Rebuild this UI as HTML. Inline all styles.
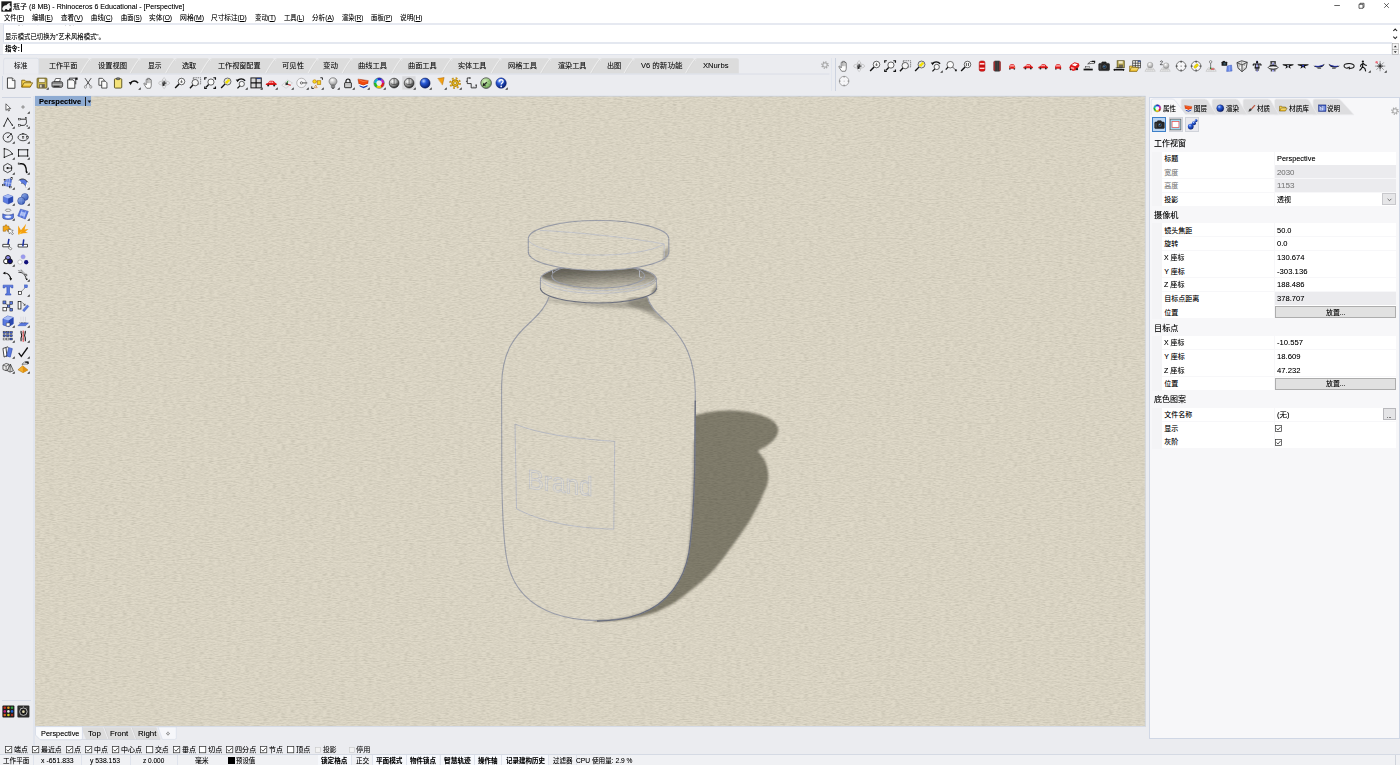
<!DOCTYPE html>
<html lang="zh-CN"><head><meta charset="utf-8"><title>瓶子 - Rhinoceros 6 Educational</title>
<style>
html,body{margin:0;padding:0}
body{width:1400px;height:765px;overflow:hidden;position:relative;background:#ebecf0;font-family:"Liberation Sans","Noto Sans CJK SC",sans-serif;font-size:6.6px;color:#000}
.t{position:absolute;white-space:nowrap;line-height:1.5;transform-origin:0 50%;text-shadow:0 0 0.6px rgba(0,0,0,0.35)}
.b{position:absolute;box-sizing:border-box}
svg{position:absolute;overflow:visible}
u{text-decoration:underline;text-decoration-thickness:0.5px;text-underline-offset:0.6px}
</style></head>
<body>
<svg width="0" height="0" style="left:0;top:0"><defs><radialGradient id="gBall" cx="0.38" cy="0.32" r="0.7"><stop offset="0" stop-color="#fff"/><stop offset="0.45" stop-color="#bbb"/><stop offset="1" stop-color="#222"/></radialGradient><radialGradient id="gBlue" cx="0.36" cy="0.3" r="0.75"><stop offset="0" stop-color="#bcd4ff"/><stop offset="0.35" stop-color="#2a5bd8"/><stop offset="1" stop-color="#061a66"/></radialGradient><radialGradient id="gGreen" cx="0.4" cy="0.35" r="0.7"><stop offset="0" stop-color="#d6f0c0"/><stop offset="0.7" stop-color="#8cc070"/><stop offset="1" stop-color="#4a6a40"/></radialGradient><radialGradient id="gGray" cx="0.4" cy="0.3" r="0.7"><stop offset="0" stop-color="#fff"/><stop offset="1" stop-color="#999"/></radialGradient><linearGradient id="gFold" x1="0" y1="0" x2="0" y2="1"><stop offset="0" stop-color="#fff2a0"/><stop offset="1" stop-color="#e8b010"/></linearGradient><linearGradient id="gBlu2" x1="0" y1="0" x2="1" y2="1"><stop offset="0" stop-color="#9db8f0"/><stop offset="1" stop-color="#2a4fb0"/></linearGradient></defs></svg>
<div class="b" style="left:0.00px;top:0.00px;width:1400.00px;height:23.50px;background:#fff;"></div>
<svg style="left:0.50px;top:0.70px" width="11.00" height="11.00" viewBox="0 0 13 13"><rect x="0.400" y="0.400" width="12.200" height="12.200" fill="#1a1a1a"/><path d="M1.400 9.400c.6-3 2.400-4.600 5-4.400 1.400-2 3-2.800 4.800-2.600-.8.800-1.200 1.600-1 2.600 1.200.8 1.600 2.200 1.400 3.400l-1.600.4-.6 1.800H7.600L7 9.400l-2.200.4-.4 1.600H2.600z" fill="#f4f4f4"/></svg>
<span class="t" id="t1" style="left:12.80px;top:1.87px;font-size:6.70px;color:#000;transform:scaleX(1.0582);">瓶子 (8 MB) - Rhinoceros 6 Educational - [Perspective]</span>
<svg style="left:1330px;top:0" width="70" height="12" viewBox="0 0 70 12"><g stroke="#222" stroke-width="0.7" fill="none"><path d="M4.3 5.5h5.6"/><path d="M29 4.3h4v4h-4z M30 4.3v-1h4v4h-1" /><path d="M54.2 3.2l4.6 4.6M58.8 3.2l-4.6 4.6"/></g></svg>
<span class="t" id="t2" style="left:4.00px;top:13.07px;font-size:7.10px;color:#000;transform:scaleX(0.8762);">文件(<u>F</u>)</span>
<span class="t" id="t3" style="left:32.40px;top:13.07px;font-size:7.10px;color:#000;transform:scaleX(0.8829);">编辑(<u>E</u>)</span>
<span class="t" id="t4" style="left:61.10px;top:13.07px;font-size:7.10px;color:#000;transform:scaleX(0.9251);">查看(<u>V</u>)</span>
<span class="t" id="t5" style="left:90.90px;top:13.07px;font-size:7.10px;color:#000;transform:scaleX(0.9018);">曲线(<u>C</u>)</span>
<span class="t" id="t6" style="left:120.50px;top:13.07px;font-size:7.10px;color:#000;transform:scaleX(0.8787);">曲面(<u>S</u>)</span>
<span class="t" id="t7" style="left:148.80px;top:13.07px;font-size:7.10px;color:#000;transform:scaleX(0.9441);">实体(<u>O</u>)</span>
<span class="t" id="t8" style="left:179.70px;top:13.07px;font-size:7.10px;color:#000;transform:scaleX(0.9695);">网格(<u>M</u>)</span>
<span class="t" id="t9" style="left:211.00px;top:13.07px;font-size:7.10px;color:#000;transform:scaleX(0.9359);">尺寸标注(<u>D</u>)</span>
<span class="t" id="t10" style="left:254.50px;top:13.07px;font-size:7.10px;color:#000;transform:scaleX(0.9020);">变动(<u>T</u>)</span>
<span class="t" id="t11" style="left:283.70px;top:13.07px;font-size:7.10px;color:#000;transform:scaleX(0.8956);">工具(<u>L</u>)</span>
<span class="t" id="t12" style="left:312.00px;top:13.07px;font-size:7.10px;color:#000;transform:scaleX(0.9294);">分析(<u>A</u>)</span>
<span class="t" id="t13" style="left:342.00px;top:13.07px;font-size:7.10px;color:#000;transform:scaleX(0.8852);">渲染(<u>R</u>)</span>
<span class="t" id="t14" style="left:371.00px;top:13.07px;font-size:7.10px;color:#000;transform:scaleX(0.9040);">面板(<u>P</u>)</span>
<span class="t" id="t15" style="left:400.00px;top:13.07px;font-size:7.10px;color:#000;transform:scaleX(0.9351);">说明(<u>H</u>)</span>
<div class="b" style="left:0.00px;top:22.60px;width:1400.00px;height:2.20px;background:#e6e9f1;"></div>
<div class="b" style="left:3.00px;top:24.80px;width:1388.50px;height:17.40px;background:#fff;"></div>
<div class="b" style="left:0.00px;top:24.20px;width:3.00px;height:31.00px;background:#ebecf0;"></div>
<div class="b" style="left:2.60px;top:24.20px;width:0.70px;height:30.00px;background:#d8dde8;"></div>
<div class="b" style="left:3.00px;top:42.20px;width:1397.00px;height:1.50px;background:#e4e8f0;"></div>
<div class="b" style="left:3.30px;top:43.70px;width:1388.20px;height:10.50px;background:#fff;"></div>
<div class="b" style="left:1391.50px;top:24.80px;width:8.50px;height:29.40px;background:#fff;"></div>
<div class="b" style="left:0.00px;top:54.30px;width:1400.00px;height:0.80px;background:#dfe3ec;"></div>
<div class="b" style="left:3px;top:24.8px;width:400px;height:2.8px;overflow:hidden"><span class="t" style="left:1.6px;top:-7.6px;font-size:6.6px;transform:scaleX(0.93)">显示模式已切换为“渲染模式”。</span></div>
<span class="t" id="t16" style="left:4.60px;top:31.98px;font-size:7.10px;color:#000;transform:scaleX(0.8972);">显示模式已切换为"艺术风格模式"。</span>
<span class="t" id="t17" style="left:4.60px;top:43.58px;font-size:7.10px;color:#000;font-weight:bold;transform:scaleX(0.8936);">指令:</span>
<div class="b" style="left:21.30px;top:43.80px;width:0.60px;height:8.60px;background:#000;"></div>
<svg style="left:1391px;top:24px" width="9" height="32" viewBox="0 0 9 32"><g stroke="#222" stroke-width="1.05" fill="none"><path d="M2.3 7l1.9-1.9 1.9 1.9"/><path d="M2.3 12.6l1.9 1.9 1.9-1.9"/></g><rect x="1.3" y="19.6" width="6" height="5.6" fill="#f4f4f4" stroke="#999" stroke-width="0.5"/><path d="M2.8 23.3l1.5-1.8 1.5 1.8z" fill="#222"/><rect x="1.3" y="25.6" width="6" height="5" fill="#f4f4f4" stroke="#999" stroke-width="0.5"/><path d="M2.8 27.2l1.5 1.8 1.5-1.8z" fill="#222"/></svg>
<svg style="left:0;top:57px" width="840" height="18" viewBox="0 57 840 18"><path d="M38.5 58.3 H737 Q738.8 58.3 738.8 60 V73.6 H38.5 Z" fill="#dcdcdc"/><path d="M3.6 74.2 V60.2 Q3.6 58.3 5.6 58.3 H36.8 Q38.8 58.3 38.8 60.2 V74.2 Z" fill="#ebecf0" stroke="#d5dae4" stroke-width="0.6"/><rect x="4" y="73.4" width="34.5" height="1.4" fill="#ebecf0"/><path d="M87.80 58 H91.90 L90.10 61.6 C90.10 60 89.50 58.8 87.80 58.3 Z" fill="#ebecf0"/><path d="M90.50 58.5 C88.50 60 83.50 68 80.50 73.6" stroke="#eeeeee" stroke-width="1.1" fill="none"/><path d="M91.30 58.5 C89.30 60 84.30 68 81.30 73.6" stroke="#cfcfcf" stroke-width="0.5" fill="none"/><path d="M137.30 58 H141.40 L139.60 61.6 C139.60 60 139.00 58.8 137.30 58.3 Z" fill="#ebecf0"/><path d="M140.00 58.5 C138.00 60 133.00 68 130.00 73.6" stroke="#eeeeee" stroke-width="1.1" fill="none"/><path d="M140.80 58.5 C138.80 60 133.80 68 130.80 73.6" stroke="#cfcfcf" stroke-width="0.5" fill="none"/><path d="M172.80 58 H176.90 L175.10 61.6 C175.10 60 174.50 58.8 172.80 58.3 Z" fill="#ebecf0"/><path d="M175.50 58.5 C173.50 60 168.50 68 165.50 73.6" stroke="#eeeeee" stroke-width="1.1" fill="none"/><path d="M176.30 58.5 C174.30 60 169.30 68 166.30 73.6" stroke="#cfcfcf" stroke-width="0.5" fill="none"/><path d="M207.80 58 H211.90 L210.10 61.6 C210.10 60 209.50 58.8 207.80 58.3 Z" fill="#ebecf0"/><path d="M210.50 58.5 C208.50 60 203.50 68 200.50 73.6" stroke="#eeeeee" stroke-width="1.1" fill="none"/><path d="M211.30 58.5 C209.30 60 204.30 68 201.30 73.6" stroke="#cfcfcf" stroke-width="0.5" fill="none"/><path d="M272.80 58 H276.90 L275.10 61.6 C275.10 60 274.50 58.8 272.80 58.3 Z" fill="#ebecf0"/><path d="M275.50 58.5 C273.50 60 268.50 68 265.50 73.6" stroke="#eeeeee" stroke-width="1.1" fill="none"/><path d="M276.30 58.5 C274.30 60 269.30 68 266.30 73.6" stroke="#cfcfcf" stroke-width="0.5" fill="none"/><path d="M315.30 58 H319.40 L317.60 61.6 C317.60 60 317.00 58.8 315.30 58.3 Z" fill="#ebecf0"/><path d="M318.00 58.5 C316.00 60 311.00 68 308.00 73.6" stroke="#eeeeee" stroke-width="1.1" fill="none"/><path d="M318.80 58.5 C316.80 60 311.80 68 308.80 73.6" stroke="#cfcfcf" stroke-width="0.5" fill="none"/><path d="M349.30 58 H353.40 L351.60 61.6 C351.60 60 351.00 58.8 349.30 58.3 Z" fill="#ebecf0"/><path d="M352.00 58.5 C350.00 60 345.00 68 342.00 73.6" stroke="#eeeeee" stroke-width="1.1" fill="none"/><path d="M352.80 58.5 C350.80 60 345.80 68 342.80 73.6" stroke="#cfcfcf" stroke-width="0.5" fill="none"/><path d="M399.05 58 H403.15 L401.35 61.6 C401.35 60 400.75 58.8 399.05 58.3 Z" fill="#ebecf0"/><path d="M401.75 58.5 C399.75 60 394.75 68 391.75 73.6" stroke="#eeeeee" stroke-width="1.1" fill="none"/><path d="M402.55 58.5 C400.55 60 395.55 68 392.55 73.6" stroke="#cfcfcf" stroke-width="0.5" fill="none"/><path d="M449.05 58 H453.15 L451.35 61.6 C451.35 60 450.75 58.8 449.05 58.3 Z" fill="#ebecf0"/><path d="M451.75 58.5 C449.75 60 444.75 68 441.75 73.6" stroke="#eeeeee" stroke-width="1.1" fill="none"/><path d="M452.55 58.5 C450.55 60 445.55 68 442.55 73.6" stroke="#cfcfcf" stroke-width="0.5" fill="none"/><path d="M498.30 58 H502.40 L500.60 61.6 C500.60 60 500.00 58.8 498.30 58.3 Z" fill="#ebecf0"/><path d="M501.00 58.5 C499.00 60 494.00 68 491.00 73.6" stroke="#eeeeee" stroke-width="1.1" fill="none"/><path d="M501.80 58.5 C499.80 60 494.80 68 491.80 73.6" stroke="#cfcfcf" stroke-width="0.5" fill="none"/><path d="M547.80 58 H551.90 L550.10 61.6 C550.10 60 549.50 58.8 547.80 58.3 Z" fill="#ebecf0"/><path d="M550.50 58.5 C548.50 60 543.50 68 540.50 73.6" stroke="#eeeeee" stroke-width="1.1" fill="none"/><path d="M551.30 58.5 C549.30 60 544.30 68 541.30 73.6" stroke="#cfcfcf" stroke-width="0.5" fill="none"/><path d="M597.80 58 H601.90 L600.10 61.6 C600.10 60 599.50 58.8 597.80 58.3 Z" fill="#ebecf0"/><path d="M600.50 58.5 C598.50 60 593.50 68 590.50 73.6" stroke="#eeeeee" stroke-width="1.1" fill="none"/><path d="M601.30 58.5 C599.30 60 594.30 68 591.30 73.6" stroke="#cfcfcf" stroke-width="0.5" fill="none"/><path d="M631.30 58 H635.40 L633.60 61.6 C633.60 60 633.00 58.8 631.30 58.3 Z" fill="#ebecf0"/><path d="M634.00 58.5 C632.00 60 627.00 68 624.00 73.6" stroke="#eeeeee" stroke-width="1.1" fill="none"/><path d="M634.80 58.5 C632.80 60 627.80 68 624.80 73.6" stroke="#cfcfcf" stroke-width="0.5" fill="none"/><path d="M692.80 58 H696.90 L695.10 61.6 C695.10 60 694.50 58.8 692.80 58.3 Z" fill="#ebecf0"/><path d="M695.50 58.5 C693.50 60 688.50 68 685.50 73.6" stroke="#eeeeee" stroke-width="1.1" fill="none"/><path d="M696.30 58.5 C694.30 60 689.30 68 686.30 73.6" stroke="#cfcfcf" stroke-width="0.5" fill="none"/><path d="M38.8 74 H829.5" stroke="#d5dae4" stroke-width="0.8"/></svg>
<span class="t" id="t18" style="left:13.80px;top:61.38px;font-size:7.10px;color:#111;transform:scaleX(0.9445);">标准</span>
<span class="t" id="t19" style="left:48.75px;top:61.38px;font-size:7.10px;color:#111;transform:scaleX(0.9956);">工作平面</span>
<span class="t" id="t20" style="left:98.00px;top:61.38px;font-size:7.10px;color:#111;transform:scaleX(1.0220);">设置视图</span>
<span class="t" id="t21" style="left:147.50px;top:61.38px;font-size:7.10px;color:#111;transform:scaleX(0.9515);">显示</span>
<span class="t" id="t22" style="left:181.75px;top:61.38px;font-size:7.10px;color:#111;transform:scaleX(1.0044);">选取</span>
<span class="t" id="t23" style="left:217.50px;top:61.38px;font-size:7.10px;color:#111;transform:scaleX(0.9985);">工作视窗配置</span>
<span class="t" id="t24" style="left:281.75px;top:61.38px;font-size:7.10px;color:#111;transform:scaleX(1.0338);">可见性</span>
<span class="t" id="t25" style="left:323.00px;top:61.38px;font-size:7.10px;color:#111;transform:scaleX(1.0573);">变动</span>
<span class="t" id="t26" style="left:358.00px;top:61.38px;font-size:7.10px;color:#111;transform:scaleX(1.0220);">曲线工具</span>
<span class="t" id="t27" style="left:408.00px;top:61.38px;font-size:7.10px;color:#111;transform:scaleX(1.0132);">曲面工具</span>
<span class="t" id="t28" style="left:458.00px;top:61.38px;font-size:7.10px;color:#111;transform:scaleX(1.0044);">实体工具</span>
<span class="t" id="t29" style="left:507.50px;top:61.38px;font-size:7.10px;color:#111;transform:scaleX(1.0220);">网格工具</span>
<span class="t" id="t30" style="left:557.50px;top:61.38px;font-size:7.10px;color:#111;transform:scaleX(1.0044);">渲染工具</span>
<span class="t" id="t31" style="left:606.75px;top:61.38px;font-size:7.10px;color:#111;transform:scaleX(1.0044);">出图</span>
<span class="t" id="t32" style="left:641.00px;top:61.38px;font-size:7.10px;color:#111;transform:scaleX(1.0633);">V6 的新功能</span>
<span class="t" id="t33" style="left:702.50px;top:61.38px;font-size:7.10px;color:#111;transform:scaleX(1.0779);">XNurbs</span>
<svg style="left:820.50px;top:61.30px" width="8.00" height="8.00" viewBox="0 0 13 13"><circle cx="6.500" cy="6.500" r="3.600" fill="none" stroke="#9a9a9a" stroke-width="1.600"/><circle cx="6.500" cy="6.500" r="5.200" fill="none" stroke="#9a9a9a" stroke-width="1.800" stroke-dasharray="2 2.080"/></svg>
<div class="b" style="left:834.70px;top:57.60px;width:0.80px;height:33.60px;background:#cdd3e0;"></div>
<div class="b" style="left:831.40px;top:57.60px;width:0.90px;height:33.60px;background:#e1e5ee;"></div>
<div class="b" style="left:2.20px;top:76.00px;width:0.80px;height:14.00px;background:#cdd3e0;"></div>
<svg style="left:5.20px;top:76.50px" width="12.20" height="12.20" viewBox="0 0 13 13"><path d="M2.6 1h5.2l2.8 2.8v8.2h-8z" fill="#fcfcfc" stroke="#222" stroke-width="0.9"/><path d="M7.8 1v2.8h2.8" fill="#e4e4e4" stroke="#222" stroke-width="0.7"/></svg>
<svg style="left:20.51px;top:76.50px" width="12.20" height="12.20" viewBox="0 0 13 13"><path d="M0.8 10.8V3.4h3.2l1 1.2h5v2" fill="#f7d34a" stroke="#6b4e00" stroke-width="0.8"/><path d="M0.8 10.8l2.4-4.6h9.2l-2.6 4.6z" fill="url(#gFold)" stroke="#6b4e00" stroke-width="0.8"/></svg>
<svg style="left:35.82px;top:76.50px" width="12.20" height="12.20" viewBox="0 0 13 13"><rect x="1.2" y="1.2" width="10.4" height="10.6" rx="0.8" fill="#c9b54a" stroke="#5b4d10" stroke-width="0.9"/><rect x="3" y="1.6" width="6.6" height="4.2" fill="#f4f0e0" stroke="#5b4d10" stroke-width="0.5"/><rect x="3.4" y="7.6" width="6" height="4" fill="#6a6250"/><rect x="4.4" y="8.3" width="1.6" height="2.8" fill="#e8e4d0"/><path d="M13.6 10.8V13.6H10.8Z" fill="#3a3a3a"/></svg>
<svg style="left:51.13px;top:76.50px" width="12.20" height="12.20" viewBox="0 0 13 13"><path d="M3.4 5.2l1.6-3.6h5.2l-1.2 3.6z" fill="#fff" stroke="#222" stroke-width="0.7"/><path d="M1 6.4c0-1 .8-1.4 1.6-1.4h8c1.2 0 1.8.6 1.8 1.6v2.8c0 1-.6 1.6-1.6 1.6H2.6C1.600 11 1 10.400 1 9.400z" fill="#8a8a8a" stroke="#222" stroke-width="0.8"/><path d="M1.600 8.200h10.200" stroke="#ddd" stroke-width="0.8"/><rect x="2.600" y="9.400" width="6.500" height="1.100" fill="#222"/></svg>
<svg style="left:66.44px;top:76.50px" width="12.20" height="12.20" viewBox="0 0 13 13"><path d="M1.8 3h5.600l2 2v7H1.800z" fill="#fafafa" stroke="#222" stroke-width="0.9"/><path d="M3.6 3V1.200h6.600M10.400 1.300v6.500" fill="none" stroke="#222" stroke-width="0.9"/><rect x="10" y="0.600" width="2.400" height="2.400" fill="#111"/></svg>
<svg style="left:81.75px;top:76.50px" width="12.20" height="12.20" viewBox="0 0 13 13"><path d="M3.200 1.200l5.600 8.200M9.800 1.200L4.200 9.400" stroke="#333" stroke-width="0.9" fill="none"/><ellipse cx="3.600" cy="10.600" rx="1.100" ry="1.500" fill="none" stroke="#8a8a8a" stroke-width="0.8"/><ellipse cx="9.400" cy="10.600" rx="1.100" ry="1.500" fill="none" stroke="#8a8a8a" stroke-width="0.8"/></svg>
<svg style="left:97.06px;top:76.50px" width="12.20" height="12.20" viewBox="0 0 13 13"><path d="M2 1.400h3.800l1.800 1.800v5.600H2z" fill="#fafafa" stroke="#222" stroke-width="0.8"/><path d="M5 4.400h3.800l1.800 1.800v5.600H5z" fill="#fafafa" stroke="#222" stroke-width="0.8"/></svg>
<svg style="left:112.37px;top:76.50px" width="12.20" height="12.20" viewBox="0 0 13 13"><rect x="2.600" y="1.800" width="7.800" height="10" rx="1" fill="#f4e37a" stroke="#4a4210" stroke-width="0.9"/><rect x="4.800" y="0.800" width="3.400" height="2" rx="0.500" fill="#777" stroke="#222" stroke-width="0.500"/></svg>
<svg style="left:127.68px;top:76.50px" width="12.20" height="12.20" viewBox="0 0 13 13"><path d="M2.400 6.800C4.500 3.600 8.500 3.400 10.800 6.600" fill="none" stroke="#111" stroke-width="1.500"/><path d="M0.800 5.400l3.600 0.300-1.600 3z" fill="#111"/><path d="M13.6 10.8V13.6H10.8Z" fill="#3a3a3a"/></svg>
<svg style="left:142.99px;top:76.50px" width="12.20" height="12.20" viewBox="0 0 13 13"><path d="M4 12c-1.200-1.600-2.400-3.200-3-4.600-.3-.8.600-1.200 1.100-.6l1.300 1.600V3c0-.9 1.200-.9 1.300 0V1.800c0-.9 1.300-.9 1.400 0V2.200c0-.9 1.300-.9 1.400 0V3.200c.1-.8 1.300-.8 1.300.1v5.500c0 1.200-.4 2.200-1 3.200z" fill="#fdfdfd" stroke="#444" stroke-width="0.700"/><path d="M4.700 3v3.600M6.100 2v4.600M7.500 2.400v4.200" stroke="#555" stroke-width="0.500"/></svg>
<svg style="left:158.30px;top:76.50px" width="12.20" height="12.20" viewBox="0 0 13 13"><ellipse cx="6.500" cy="6.500" rx="5.800" ry="2.200" fill="none" stroke="#b4b4b4" stroke-width="0.700"/><ellipse cx="6.500" cy="6.500" rx="2" ry="5.800" fill="none" stroke="#b4b4b4" stroke-width="0.700"/><path d="M6.500 4.200v5M4.200 6.500h4.800" stroke="#111" stroke-width="1"/><circle cx="5.600" cy="8.400" r="0.900" fill="#111"/></svg>
<svg style="left:173.61px;top:76.50px" width="12.20" height="12.20" viewBox="0 0 13 13"><circle cx="8" cy="4.800" r="3.500" fill="#fbfbfb" stroke="#333" stroke-width="0.800"/><path d="M5.400 7.400L1.200 11.800" stroke="#111" stroke-width="1.500"/><path d="M8 3v3.400M6.600 5.200h2.800" stroke="#333" stroke-width="0.600"/></svg>
<svg style="left:188.92px;top:76.50px" width="12.20" height="12.20" viewBox="0 0 13 13"><rect x="4.600" y="0.800" width="7.800" height="6.600" fill="none" stroke="#333" stroke-width="0.700" stroke-dasharray="1.400 0.900"/><circle cx="6.600" cy="6" r="3.400" fill="#f4f4f4" stroke="#333" stroke-width="0.800"/><path d="M4.200 8.600L1 12" stroke="#111" stroke-width="1.500"/></svg>
<svg style="left:204.23px;top:76.50px" width="12.20" height="12.20" viewBox="0 0 13 13"><path d="M0.800 3V0.800H3M10 0.800h2.200V3M12.200 10v2.200H10M3 12.200H0.800V10" fill="none" stroke="#111" stroke-width="1.300"/><circle cx="7.400" cy="5.400" r="3.300" fill="#fbfbfb" stroke="#333" stroke-width="0.800"/><path d="M5 8L2.200 11" stroke="#111" stroke-width="1.400"/></svg>
<svg style="left:219.54px;top:76.50px" width="12.20" height="12.20" viewBox="0 0 13 13"><circle cx="8" cy="4.800" r="3.700" fill="#e4e4e4" stroke="#444" stroke-width="0.800"/><circle cx="7.200" cy="5.600" r="1.500" fill="#f4e100"/><circle cx="9" cy="3.800" r="1.500" fill="#f4e100"/><path d="M5.200 7.600L1.200 11.800" stroke="#111" stroke-width="1.500"/></svg>
<svg style="left:234.85px;top:76.50px" width="12.20" height="12.20" viewBox="0 0 13 13"><path d="M2.600 4C4.600 1.400 8.600 1.400 10.800 4" fill="none" stroke="#111" stroke-width="1.400"/><path d="M0.800 2.600l3.400 0.200-1.400 2.900z" fill="#111"/><circle cx="7.200" cy="7.400" r="2.800" fill="#f8f8f8" stroke="#333" stroke-width="0.800"/><path d="M5.200 9.400L2.600 12.200" stroke="#111" stroke-width="1.300"/><path d="M13.6 10.8V13.6H10.8Z" fill="#3a3a3a"/></svg>
<svg style="left:250.16px;top:76.50px" width="12.20" height="12.20" viewBox="0 0 13 13"><rect x="1" y="1" width="11" height="10.600" fill="#d8d8d8" stroke="#111" stroke-width="1"/><path d="M6.500 1v10.600M1 6.300h11" stroke="#111" stroke-width="1.200"/><rect x="7.200" y="1.200" width="4.400" height="1" fill="#1a3a9a"/><path d="M13.6 10.8V13.6H10.8Z" fill="#3a3a3a"/></svg>
<svg style="left:265.47px;top:76.50px" width="12.20" height="12.20" viewBox="0 0 13 13"><path d="M0.800 8.400c0-1.400 1-1.800 2.400-2l1.400-1.800c.4-.5 1-.6 1.600-.6h1.800c.8 0 1.300.3 1.700.8l1.100 1.400c1 .2 1.600.8 1.600 1.600v.8H0.800z" fill="#e01818"/><path d="M5 4.800h1.200v1.400H3.900zM6.800 4.800h1.300l1 1.400H6.800z" fill="#ffd0d0"/><circle cx="3.400" cy="9" r="1.100" fill="#222"/><circle cx="9.800" cy="9" r="1.100" fill="#222"/><path d="M13.6 10.8V13.6H10.8Z" fill="#3a3a3a"/></svg>
<svg style="left:280.78px;top:76.50px" width="12.20" height="12.20" viewBox="0 0 13 13"><path d="M0.800 8.800l6.400-5.600 5 3.200-6.800 5.600z" fill="#f2f2f2" stroke="#bdbdbd" stroke-width="0.600"/><path d="M3 10.200l6.600-5.500M2.600 7.600l5.200 3.200M4.800 5.600l5.200 3.200" stroke="#cfcfcf" stroke-width="0.400"/><path d="M5.800 7.600l4.600 1.200" stroke="#d01010" stroke-width="1"/><path d="M5.800 7.600l1.600-3.400" stroke="#109010" stroke-width="1"/><rect x="4.800" y="6" width="2.600" height="2.600" fill="#333"/><path d="M13.6 10.8V13.6H10.8Z" fill="#3a3a3a"/></svg>
<svg style="left:296.09px;top:76.50px" width="12.20" height="12.20" viewBox="0 0 13 13"><circle cx="5.800" cy="6.300" r="5" fill="#f6f6f8" stroke="#8a8a8a" stroke-width="0.600"/><circle cx="5.800" cy="6.300" r="1.200" fill="#fff" stroke="#333" stroke-width="0.700"/><path d="M7 6.300h5" stroke="#333" stroke-width="0.900"/><path d="M13.6 10.8V13.6H10.8Z" fill="#3a3a3a"/></svg>
<svg style="left:311.40px;top:76.50px" width="12.20" height="12.20" viewBox="0 0 13 13"><path d="M10 0.800h2.200V3M3 12.200H0.800V10" fill="none" stroke="#222" stroke-width="1"/><circle cx="3.800" cy="4.800" r="1.900" fill="#f8d820" stroke="#b07000" stroke-width="0.600"/><rect x="6.600" y="4" width="3.800" height="3.800" fill="#f8d820" stroke="#b07000" stroke-width="0.700"/><path d="M5.600 5.200h1" stroke="#b07000" stroke-width="0.600"/><path d="M3.400 11.400l1.600-2.800 1.600 2.800z" fill="none" stroke="#d08020" stroke-width="0.700"/><path d="M13.6 10.8V13.6H10.8Z" fill="#3a3a3a"/></svg>
<svg style="left:326.71px;top:76.50px" width="12.20" height="12.20" viewBox="0 0 13 13"><path d="M6.400 0.800c2.600 0 4.200 1.800 4.200 3.900 0 1.700-1.300 2.600-1.800 3.900H4c-.5-1.300-1.800-2.200-1.800-3.900C2.200 2.600 3.800.800 6.400.800z" fill="url(#gGray)" stroke="#666" stroke-width="0.700"/><rect x="4.600" y="8.800" width="3.600" height="2.800" rx="0.600" fill="#8a8a8a" stroke="#444" stroke-width="0.500"/><path d="M5.400 12.200h2" stroke="#333" stroke-width="0.800"/><path d="M13.6 10.8V13.6H10.8Z" fill="#3a3a3a"/></svg>
<svg style="left:342.02px;top:76.50px" width="12.20" height="12.20" viewBox="0 0 13 13"><path d="M4.200 6.200V4.400c0-3 4.400-3 4.400 0V6.200" fill="none" stroke="#111" stroke-width="1.200"/><rect x="2.800" y="6" width="7.200" height="5.400" rx="0.500" fill="#d6d6d6" stroke="#111" stroke-width="0.900"/><path d="M3.600 8h5.600M3.600 9.600h5.600" stroke="#aaa" stroke-width="0.500"/><path d="M13.6 10.8V13.6H10.8Z" fill="#3a3a3a"/></svg>
<svg style="left:357.33px;top:76.50px" width="12.20" height="12.20" viewBox="0 0 13 13"><path d="M1 2.200L12 3.800l-.4 3.400L6.800 9 2 7.400z" fill="#f04a10" stroke="#7a1400" stroke-width="0.400"/><path d="M1 2.200l5.400 2.600L12 3.800" fill="none" stroke="#ffb080" stroke-width="0.500"/><path d="M2 7.400L6.800 9l4.800-1.800-.2 1.400-4.600 1.900-4.400-1.700z" fill="#fff"/><path d="M2.400 8.800l4.400 1.700 4.600-1.900-.4 1.500L7 12 3 10.200z" fill="#1a3fb0"/><path d="M13.6 10.8V13.6H10.8Z" fill="#3a3a3a"/></svg>
<svg style="left:372.64px;top:76.50px" width="12.20" height="12.20" viewBox="0 0 13 13"><circle cx="6.500" cy="6.500" r="4.300" fill="none" stroke="#e02020" stroke-width="2.600" stroke-dasharray="4.500 22.500"/><circle cx="6.500" cy="6.500" r="4.300" fill="none" stroke="#f0d000" stroke-width="2.600" stroke-dasharray="4.500 22.500" stroke-dashoffset="-4.500"/><circle cx="6.500" cy="6.500" r="4.300" fill="none" stroke="#20c020" stroke-width="2.600" stroke-dasharray="4.500 22.500" stroke-dashoffset="-9"/><circle cx="6.500" cy="6.500" r="4.300" fill="none" stroke="#10b0d0" stroke-width="2.600" stroke-dasharray="4.500 22.500" stroke-dashoffset="-13.500"/><circle cx="6.500" cy="6.500" r="4.300" fill="none" stroke="#2030d0" stroke-width="2.600" stroke-dasharray="4.500 22.500" stroke-dashoffset="-18"/><circle cx="6.500" cy="6.500" r="4.300" fill="none" stroke="#c020c0" stroke-width="2.600" stroke-dasharray="4.500 22.500" stroke-dashoffset="-22.500"/><circle cx="6.500" cy="6.500" r="5.700" fill="none" stroke="#333" stroke-width="0.400"/><path d="M13.6 10.8V13.6H10.8Z" fill="#3a3a3a"/></svg>
<svg style="left:387.95px;top:76.50px" width="12.20" height="12.20" viewBox="0 0 13 13"><circle cx="6.500" cy="6.500" r="5.200" fill="url(#gBall)" stroke="#111" stroke-width="0.600"/><path d="M6.500 1.400v6.400M3 7c1 1.400 6 1.400 7 0" fill="none" stroke="#222" stroke-width="0.600"/></svg>
<svg style="left:403.26px;top:76.50px" width="12.20" height="12.20" viewBox="0 0 13 13"><rect x="-0.800" y="-0.800" width="14.200" height="14.200" fill="#d9d9dc"/><circle cx="6.500" cy="6.500" r="5.200" fill="url(#gBall)" stroke="#111" stroke-width="0.600"/><path d="M6.500 1.400v6.400M3 7c1 1.400 6 1.400 7 0" fill="none" stroke="#222" stroke-width="0.600"/><path d="M13.6 10.8V13.6H10.8Z" fill="#3a3a3a"/></svg>
<svg style="left:418.57px;top:76.50px" width="12.20" height="12.20" viewBox="0 0 13 13"><circle cx="6.500" cy="6.500" r="5.400" fill="url(#gBlue)" stroke="#061040" stroke-width="0.500"/><path d="M13.6 10.8V13.6H10.8Z" fill="#3a3a3a"/></svg>
<svg style="left:433.88px;top:76.50px" width="12.20" height="12.20" viewBox="0 0 13 13"><path d="M4 1.600l6.800-1-1.800 8z" fill="#f4a010" stroke="#a05a00" stroke-width="0.500"/><path d="M4 1.600l5 7" stroke="#fff0c0" stroke-width="0.500"/><path d="M13.6 10.8V13.6H10.8Z" fill="#3a3a3a"/></svg>
<svg style="left:449.19px;top:76.50px" width="12.20" height="12.20" viewBox="0 0 13 13"><circle cx="6.500" cy="6.500" r="3.600" fill="#f0c020" stroke="#7a5200" stroke-width="0.800"/><circle cx="6.500" cy="6.500" r="4.900" fill="none" stroke="#e0a818" stroke-width="2" stroke-dasharray="1.900 1.950"/><circle cx="6.500" cy="6.500" r="5.800" fill="none" stroke="#7a5200" stroke-width="0.500" stroke-dasharray="1.900 2.650"/><circle cx="6.500" cy="6.500" r="1.500" fill="#fff6d0" stroke="#7a5200" stroke-width="0.600"/><path d="M13.6 10.8V13.6H10.8Z" fill="#3a3a3a"/></svg>
<svg style="left:464.50px;top:76.50px" width="12.20" height="12.20" viewBox="0 0 13 13"><path d="M5 1H2.400v3.600h-1.400M2.400 4.600v2.400h4.200v4.600h5.400V9" fill="none" stroke="#222" stroke-width="0.900"/><rect x="4.600" y="0.400" width="1.400" height="1.400" fill="#222"/><rect x="11.200" y="8" width="1.400" height="1.400" fill="#222"/><path d="M8.400 10.600h2" stroke="#222" stroke-width="0.600" stroke-dasharray="0.500 0.500"/></svg>
<svg style="left:479.81px;top:76.50px" width="12.20" height="12.20" viewBox="0 0 13 13"><circle cx="6.500" cy="6.500" r="5.700" fill="url(#gGreen)" stroke="#555" stroke-width="0.900"/><path d="M6.500 6.500L11 3.200M6.500 6.500l4.800 2M6.500 6.500l-1 5.400" stroke="#6a9a5a" stroke-width="0.600"/><path d="M2.600 10l1-3.800 2.800 2.600z" fill="#222"/><path d="M4.800 7.800l2.400-2.200" stroke="#222" stroke-width="1.100"/></svg>
<svg style="left:495.12px;top:76.50px" width="12.20" height="12.20" viewBox="0 0 13 13"><circle cx="6.500" cy="6.500" r="5.600" fill="url(#gBlue)" stroke="#0a1a70" stroke-width="0.500"/><path d="M4.600 4.800c0-2.600 4-2.600 4 0 0 1.600-2 1.600-2 3.200" fill="none" stroke="#fff" stroke-width="1.500"/><circle cx="6.600" cy="10" r="0.900" fill="#fff"/><path d="M13.6 10.8V13.6H10.8Z" fill="#3a3a3a"/></svg>
<svg style="left:837.90px;top:59.50px" width="12.20" height="12.20" viewBox="0 0 13 13"><path d="M4 12c-1.200-1.600-2.400-3.200-3-4.600-.3-.8.600-1.200 1.100-.6l1.300 1.600V3c0-.9 1.200-.9 1.300 0V1.800c0-.9 1.300-.9 1.400 0V2.200c0-.9 1.300-.9 1.400 0V3.200c.1-.8 1.300-.8 1.300.1v5.500c0 1.200-.4 2.200-1 3.200z" fill="#fdfdfd" stroke="#444" stroke-width="0.700"/><path d="M4.700 3v3.600M6.100 2v4.600M7.500 2.400v4.200" stroke="#555" stroke-width="0.500"/></svg>
<svg style="left:853.21px;top:59.50px" width="12.20" height="12.20" viewBox="0 0 13 13"><ellipse cx="6.500" cy="6.500" rx="5.800" ry="2.200" fill="none" stroke="#b4b4b4" stroke-width="0.700"/><ellipse cx="6.500" cy="6.500" rx="2" ry="5.800" fill="none" stroke="#b4b4b4" stroke-width="0.700"/><path d="M6.500 4.200v5M4.200 6.500h4.800" stroke="#111" stroke-width="1"/><circle cx="5.600" cy="8.400" r="0.900" fill="#111"/></svg>
<svg style="left:868.52px;top:59.50px" width="12.20" height="12.20" viewBox="0 0 13 13"><circle cx="8" cy="4.800" r="3.500" fill="#fbfbfb" stroke="#333" stroke-width="0.800"/><path d="M5.400 7.400L1.200 11.800" stroke="#111" stroke-width="1.500"/><path d="M8 3v3.400M6.600 5.200h2.800" stroke="#333" stroke-width="0.600"/></svg>
<svg style="left:883.83px;top:59.50px" width="12.20" height="12.20" viewBox="0 0 13 13"><path d="M0.800 3V0.800H3M10 0.800h2.200V3M12.200 10v2.200H10M3 12.200H0.800V10" fill="none" stroke="#111" stroke-width="1.300"/><circle cx="7.400" cy="5.400" r="3.300" fill="#fbfbfb" stroke="#333" stroke-width="0.800"/><path d="M5 8L2.200 11" stroke="#111" stroke-width="1.400"/></svg>
<svg style="left:899.14px;top:59.50px" width="12.20" height="12.20" viewBox="0 0 13 13"><rect x="4.600" y="0.800" width="7.800" height="6.600" fill="none" stroke="#333" stroke-width="0.700" stroke-dasharray="1.400 0.900"/><circle cx="6.600" cy="6" r="3.400" fill="#f4f4f4" stroke="#333" stroke-width="0.800"/><path d="M4.200 8.600L1 12" stroke="#111" stroke-width="1.500"/></svg>
<svg style="left:914.45px;top:59.50px" width="12.20" height="12.20" viewBox="0 0 13 13"><circle cx="8" cy="4.800" r="3.700" fill="#e4e4e4" stroke="#444" stroke-width="0.800"/><circle cx="7.200" cy="5.600" r="1.500" fill="#f4e100"/><circle cx="9" cy="3.800" r="1.500" fill="#f4e100"/><path d="M5.200 7.600L1.200 11.800" stroke="#111" stroke-width="1.500"/></svg>
<svg style="left:929.76px;top:59.50px" width="12.20" height="12.20" viewBox="0 0 13 13"><path d="M2.600 4C4.600 1.400 8.600 1.400 10.800 4" fill="none" stroke="#111" stroke-width="1.400"/><path d="M0.800 2.600l3.400 0.200-1.400 2.900z" fill="#111"/><circle cx="7.200" cy="7.400" r="2.800" fill="#f8f8f8" stroke="#333" stroke-width="0.800"/><path d="M5.200 9.400L2.600 12.200" stroke="#111" stroke-width="1.300"/><path d="M13.6 10.8V13.6H10.8Z" fill="#3a3a3a"/></svg>
<svg style="left:945.07px;top:59.50px" width="12.20" height="12.20" viewBox="0 0 13 13"><circle cx="5.600" cy="5" r="3.500" fill="#fbfbfb" stroke="#444" stroke-width="0.800"/><path d="M3.200 7.600L0.800 10.200" stroke="#111" stroke-width="1.300"/><path d="M8 7.400l3.400 3.400" stroke="#333" stroke-width="0.800"/><rect x="10.600" y="10" width="2" height="2" fill="#222"/></svg>
<svg style="left:960.38px;top:59.50px" width="12.20" height="12.20" viewBox="0 0 13 13"><circle cx="8" cy="4.800" r="3.500" fill="#fbfbfb" stroke="#333" stroke-width="0.800"/><path d="M5.400 7.400L1.200 11.800" stroke="#111" stroke-width="1.500"/><path d="M6.800 3.200v3.200M9 3.200v3.200" stroke="#222" stroke-width="0.800"/></svg>
<svg style="left:975.69px;top:59.50px" width="12.20" height="12.20" viewBox="0 0 13 13"><rect x="3.400" y="1" width="6.200" height="11" rx="2" fill="#e01818" stroke="#8a0a0a" stroke-width="0.500"/><rect x="4" y="3.200" width="5" height="1.800" fill="#ffd8d8"/><rect x="4" y="8" width="5" height="1.600" fill="#ffd8d8"/><rect x="4.200" y="5.200" width="4.600" height="2.600" fill="#c01010"/></svg>
<svg style="left:991.00px;top:59.50px" width="12.20" height="12.20" viewBox="0 0 13 13"><rect x="3" y="1" width="7" height="11" rx="1.600" fill="#555" stroke="#222" stroke-width="0.500"/><path d="M3.400 1.600v9.800M9.600 1.600v9.800" stroke="#e01818" stroke-width="0.900"/><path d="M5.400 1.400v10.200M7.600 1.400v10.200" stroke="#111" stroke-width="0.800"/></svg>
<svg style="left:1006.31px;top:59.50px" width="12.20" height="12.20" viewBox="0 0 13 13"><g transform="translate(1.3 1.6) scale(0.8)"><path d="M2.400 9.600V7.200l1.200-2.600c.3-.6.800-.8 1.400-.8h3c.6 0 1.100.2 1.400.8l1.200 2.600v2.400z" fill="#e01818"/><path d="M4.200 5h4.600l.8 1.800H3.400z" fill="#ffc8c8"/><rect x="2.600" y="9.200" width="1.800" height="1.600" fill="#222"/><rect x="8.600" y="9.200" width="1.800" height="1.600" fill="#222"/><circle cx="3.600" cy="8" r="0.600" fill="#ffe060"/><circle cx="9.400" cy="8" r="0.600" fill="#ffe060"/></g></svg>
<svg style="left:1021.62px;top:59.50px" width="12.20" height="12.20" viewBox="0 0 13 13"><g transform="translate(0.6 1) scale(0.9)"><path d="M0.800 8.400c0-1.400 1-1.800 2.400-2l1.400-1.800c.4-.5 1-.6 1.600-.6h1.800c.8 0 1.300.3 1.700.8l1.100 1.400c1 .2 1.600.8 1.600 1.600v.8H0.800z" fill="#e01818"/><path d="M5 4.800h1.200v1.400H3.900zM6.800 4.800h1.300l1 1.400H6.800z" fill="#ffd0d0"/><circle cx="3.400" cy="9" r="1.100" fill="#222"/><circle cx="9.800" cy="9" r="1.100" fill="#222"/></g></svg>
<svg style="left:1036.93px;top:59.50px" width="12.20" height="12.20" viewBox="0 0 13 13"><g transform="translate(0.6 1) scale(0.9)"><path d="M0.800 8.400c0-1.400 1-1.800 2.400-2l1.400-1.800c.4-.5 1-.6 1.600-.6h1.800c.8 0 1.300.3 1.700.8l1.100 1.400c1 .2 1.600.8 1.600 1.600v.8H0.800z" fill="#e01818"/><path d="M5 4.800h1.200v1.400H3.900zM6.800 4.800h1.300l1 1.400H6.800z" fill="#ffd0d0"/><circle cx="3.400" cy="9" r="1.100" fill="#222"/><circle cx="9.800" cy="9" r="1.100" fill="#222"/></g></svg>
<svg style="left:1052.24px;top:59.50px" width="12.20" height="12.20" viewBox="0 0 13 13"><g transform="translate(1.3 1.6) scale(0.8)"><path d="M2.400 9.600V7.200l1.200-2.600c.3-.6.800-.8 1.400-.8h3c.6 0 1.100.2 1.400.8l1.200 2.600v2.400z" fill="#e01818"/><path d="M4.200 5h4.600l.8 1.800H3.400z" fill="#ffc8c8"/><rect x="2.600" y="9.200" width="1.800" height="1.600" fill="#222"/><rect x="8.600" y="9.200" width="1.800" height="1.600" fill="#222"/></g></svg>
<svg style="left:1067.55px;top:59.50px" width="12.20" height="12.20" viewBox="0 0 13 13"><path d="M1.200 8.600l1.400-3.200 4.400-3 4.600 1.200.6 2.400-3 4.600-4 1z" fill="#e01818"/><path d="M4 5.400l3-2 3.400 1-2.600 2.200z" fill="#fff"/><path d="M3.200 7.200l3.600 1-0.400 2-3.400-1z" fill="#ff9a9a"/><circle cx="9.600" cy="9.800" r="1.200" fill="#222"/><circle cx="2.800" cy="10" r="0.900" fill="#222"/></svg>
<svg style="left:1082.86px;top:59.50px" width="12.20" height="12.20" viewBox="0 0 13 13"><path d="M5 4.200l3-2.600h4.200v2H9.400z" fill="#f4f4f4" stroke="#222" stroke-width="0.700"/><path d="M9.400 1.400h3v1.400" stroke="#111" stroke-width="1.200" fill="none"/><rect x="2.800" y="7" width="4.400" height="1.600" fill="#fff" stroke="#333" stroke-width="0.500"/><path d="M0.600 10.200h9.800" stroke="#111" stroke-width="1.800"/><path d="M1 8.800h9" stroke="#999" stroke-width="0.600"/></svg>
<svg style="left:1098.17px;top:59.50px" width="12.20" height="12.20" viewBox="0 0 13 13"><path d="M0.800 4.600c0-.6.400-1 1-1h1.600l1-1.600h4l1 1.600H11.200c.6 0 1 .4 1 1v5.800c0 .5-.4.900-1 .9H1.800c-.6 0-1-.4-1-.9z" fill="#2a2a2a" stroke="#000" stroke-width="0.500"/><circle cx="7" cy="7.200" r="2.900" fill="#555" stroke="#111" stroke-width="0.700"/><circle cx="7" cy="7.200" r="1.600" fill="#1a3a5a"/><circle cx="6.400" cy="6.600" r="0.600" fill="#7ab0e0"/><rect x="1.600" y="5" width="1.800" height="5" fill="#444"/></svg>
<svg style="left:1113.48px;top:59.50px" width="12.20" height="12.20" viewBox="0 0 13 13"><rect x="4.400" y="0.800" width="7.600" height="7.400" fill="#b8a850" stroke="#4a4010" stroke-width="0.700"/><rect x="6" y="1.200" width="4.400" height="2.600" fill="#efe8c8"/><rect x="6.200" y="5" width="4.400" height="3" fill="#6a6250"/><path d="M2.800 8.400h7.400" stroke="#222" stroke-width="0.800"/><path d="M0.800 10.400h11" stroke="#111" stroke-width="1.600"/><path d="M0.400 10.400l1.600-1.400v2.800zM12.400 10.400l-1.600-1.400v2.800z" fill="#111"/></svg>
<svg style="left:1128.79px;top:59.50px" width="12.20" height="12.20" viewBox="0 0 13 13"><rect x="4" y="0.800" width="8.400" height="7.600" fill="#f4f4f4" stroke="#222" stroke-width="0.700"/><path d="M6.800 0.800v7.600M9.600 0.800v7.600M4 3.400h8.400M4 6h8.400" stroke="#222" stroke-width="0.700"/><rect x="9.600" y="0.800" width="2.800" height="1" fill="#1a3a9a"/><path d="M0.600 12.200V6.400h2.600l.8 1h3.600v1.200" fill="#f7d34a" stroke="#6b4e00" stroke-width="0.600"/><path d="M0.600 12.200l1.800-4h8l-2 4z" fill="url(#gFold)" stroke="#6b4e00" stroke-width="0.600"/></svg>
<svg style="left:1144.10px;top:59.50px" width="12.20" height="12.20" viewBox="0 0 13 13"><path d="M1 12l2.400-3.600h6.200L12 12z" fill="#eee" stroke="#b0b0b0" stroke-width="0.500"/><path d="M2.200 10.200h8.600M5 8.400L4 12M8 8.400L9 12M6.500 8.400V12" stroke="#b0b0b0" stroke-width="0.400"/><circle cx="6.500" cy="5.400" r="3" fill="url(#gGray)" stroke="#888" stroke-width="0.400"/></svg>
<svg style="left:1159.41px;top:59.50px" width="12.20" height="12.20" viewBox="0 0 13 13"><path d="M1 12l2.400-3.600h6.200L12 12z" fill="#eee" stroke="#b0b0b0" stroke-width="0.500"/><path d="M2.200 10.200h8.600M5 8.400L4 12M8 8.400L9 12M6.500 8.400V12" stroke="#b0b0b0" stroke-width="0.400"/><circle cx="7.600" cy="6" r="3" fill="url(#gGray)" stroke="#888" stroke-width="0.400"/><path d="M1.400 2.200c0-1.600 2.400-1.600 2.400-.2 0 1-2.400 1.600-2.400 3h2.600" fill="none" stroke="#222" stroke-width="0.700"/></svg>
<svg style="left:1174.72px;top:59.50px" width="12.20" height="12.20" viewBox="0 0 13 13"><circle cx="6.500" cy="6.500" r="5.100" fill="#f6f6f8" stroke="#333" stroke-width="0.650"/><path d="M6.500 0.800v2.200M6.500 10v2.200M0.800 6.500h2.200M10 6.500h2.200" stroke="#111" stroke-width="0.800"/><circle cx="6.500" cy="6.500" r="0.600" fill="#555"/></svg>
<svg style="left:1190.03px;top:59.50px" width="12.20" height="12.20" viewBox="0 0 13 13"><circle cx="6.500" cy="6.500" r="5.100" fill="#f6f6f8" stroke="#333" stroke-width="0.650"/><path d="M6.500 0.800v2.200M6.500 10v2.200M0.800 6.500h2.200M10 6.500h2.200" stroke="#111" stroke-width="0.800"/><circle cx="5.600" cy="7.400" r="1.500" fill="#f4e100" stroke="#b09000" stroke-width="0.300"/><circle cx="7.400" cy="5.600" r="1.500" fill="#f4e100" stroke="#b09000" stroke-width="0.300"/></svg>
<svg style="left:1205.34px;top:59.50px" width="12.20" height="12.20" viewBox="0 0 13 13"><path d="M1 12l2.400-3.600h6.200L12 12z" fill="#eee" stroke="#b0b0b0" stroke-width="0.500"/><path d="M2.200 10.200h8.600M5 8.400L4 12M8 8.400L9 12M6.500 8.400V12" stroke="#b0b0b0" stroke-width="0.400"/><circle cx="6" cy="2" r="1.300" fill="#fff" stroke="#444" stroke-width="0.600"/><path d="M6 3.400v6" stroke="#444" stroke-width="0.700"/><path d="M6 9.600h4" stroke="#d01010" stroke-width="1"/><path d="M6 9.600v-1.600" stroke="#109010" stroke-width="1"/></svg>
<svg style="left:1220.65px;top:59.50px" width="12.20" height="12.20" viewBox="0 0 13 13"><rect x="0.600" y="1.800" width="6" height="4.400" rx="0.600" fill="#1a1a1a"/><rect x="1.800" y="1" width="2.400" height="1.200" fill="#1a1a1a"/><rect x="2.600" y="2.800" width="2.400" height="2.200" fill="#3a5a6a"/><path d="M6.600 6.400l4.600-1 .6 6.400-5.800.4z" fill="#6a8ae8" stroke="#3a55b8" stroke-width="0.500"/><path d="M8.800 5.800l.2 6" stroke="#c0d0ff" stroke-width="0.500"/></svg>
<svg style="left:1235.96px;top:59.50px" width="12.20" height="12.20" viewBox="0 0 13 13"><path d="M1 2.800l5-2 6 1.600-1.200 6.400-4.400 3.600-4.200-3.600z" fill="#e0e0e0" stroke="#222" stroke-width="0.800"/><path d="M1 2.800l5.400 2.400 5.600-2.800M6.400 5.200v7.200" stroke="#222" stroke-width="0.800" fill="none"/><path d="M3.200 4l.4 6M9 4l-.4 6.400M6 0.800v4" stroke="#666" stroke-width="0.500"/><circle cx="4.400" cy="7.800" r="0.900" fill="#fff"/><circle cx="8.800" cy="7.200" r="0.900" fill="#fff"/></svg>
<svg style="left:1251.27px;top:59.50px" width="12.20" height="12.20" viewBox="0 0 13 13"><path d="M6.500 0.600v12" stroke="#3a3ad0" stroke-width="0.800"/><path d="M2.400 4.200h8.200M2.400 4.200v2M10.600 4.200v2M4.600 4.200v4.200M8.400 4.200v4.200M3.800 8.400h5.400" stroke="#111" stroke-width="1.100" fill="none"/><circle cx="6.500" cy="2.300" r="1.200" fill="#111"/><path d="M5.400 8.600v3M7.600 8.600v3" stroke="#111" stroke-width="0.900"/></svg>
<svg style="left:1266.58px;top:59.50px" width="12.20" height="12.20" viewBox="0 0 13 13"><path d="M6.500 3v9.400" stroke="#3a3ad0" stroke-width="0.900"/><path d="M3.600 1.800h5.800M4.400 1.800v2.600M8.600 1.800v2.600" stroke="#111" stroke-width="1.200" fill="none"/><ellipse cx="6.500" cy="8" rx="5.200" ry="1.800" fill="#f4f4f4" stroke="#111" stroke-width="1"/><path d="M3 5.600h7" stroke="#111" stroke-width="1.200"/><path d="M4.600 10v2.200M8.400 10v2.200" stroke="#111" stroke-width="1"/></svg>
<svg style="left:1281.89px;top:59.50px" width="12.20" height="12.20" viewBox="0 0 13 13"><path d="M0.600 4.600h11.800l-.4.900L8.400 6.600l1 2.600-2.900-1.700-2.900 1.700 1-2.600L1 5.500z" fill="#111"/><path d="M5.200 5.600h2.600l-1.300 2z" fill="#dfe4ff"/></svg>
<svg style="left:1297.20px;top:59.50px" width="12.20" height="12.20" viewBox="0 0 13 13"><path d="M0.600 4.600h11.800l-.4.900L8.400 6.600l1 2.600-2.900-1.700-2.900 1.700 1-2.600L1 5.500z" fill="#111"/><path d="M5.200 5.400h2.600l-1.300 2.200z" fill="#2a3ad0"/></svg>
<svg style="left:1312.51px;top:59.50px" width="12.20" height="12.20" viewBox="0 0 13 13"><path d="M0.600 5.800c2.200 1.200 8.800 .800 11.800-1.800-.6 2.600-2.800 4-5.800 4S1.200 7.400.600 5.800z" fill="#111"/><path d="M2.200 6.400c2.400.800 6.400.400 8.600-1" stroke="#2a3ad0" stroke-width="0.900" fill="none"/><path d="M4.800 8.800h3.800" stroke="#111" stroke-width="0.800"/></svg>
<svg style="left:1327.82px;top:59.50px" width="12.20" height="12.20" viewBox="0 0 13 13"><path d="M12.400 5.800c-2.200 1.200-8.800 .800-11.800-1.800.6 2.600 2.800 4 5.800 4s5.400-.600 6-2.200z" fill="#111"/><path d="M10.800 6.400c-2.400.800-6.400.400-8.600-1" stroke="#2a3ad0" stroke-width="0.900" fill="none"/><path d="M4.400 8.800h3.800" stroke="#111" stroke-width="0.800"/></svg>
<svg style="left:1343.13px;top:59.50px" width="12.20" height="12.20" viewBox="0 0 13 13"><ellipse cx="6.500" cy="6.400" rx="5.400" ry="2.600" fill="none" stroke="#111" stroke-width="1.100"/><path d="M4.200 8l3.200-1-0.600 3.400z" fill="#111"/><rect x="5" y="8.400" width="1" height="1.400" fill="#ebecf0"/></svg>
<svg style="left:1358.44px;top:59.50px" width="12.20" height="12.20" viewBox="0 0 13 13"><circle cx="5.200" cy="1.600" r="1.200" fill="#111"/><path d="M5.400 3l-.6 4 2.600 2.200.8 3M4.800 7l-1.400 2.600-1.800 1.600M5.200 3.600L3 5.400l-.4 1.800M5.600 3.600l2 1.800 1.800.4" fill="none" stroke="#111" stroke-width="1.200"/><path d="M13.6 10.8V13.6H10.8Z" fill="#3a3a3a"/></svg>
<svg style="left:1373.75px;top:59.50px" width="12.20" height="12.20" viewBox="0 0 13 13"><path d="M6.500 1v11M1 6.500h11M2.600 2.600l7.800 7.800M10.400 2.600l-7.800 7.800" stroke="#555" stroke-width="0.600"/><path d="M6.500 3.600v5.800M3.600 6.500h5.800" stroke="#111" stroke-width="0.900"/><circle cx="2.800" cy="2.400" r="1.300" fill="#f06070" opacity="0.850"/><path d="M13.6 10.8V13.6H10.8Z" fill="#3a3a3a"/></svg>
<svg style="left:837.90px;top:74.70px" width="12.20" height="12.20" viewBox="0 0 13 13"><circle cx="6.500" cy="6.500" r="5.100" fill="#f6f6f8" stroke="#666" stroke-width="0.550"/><path d="M6.500 1.200v1.600M6.500 10.200v1.600M1.200 6.500h1.600M10.200 6.500h1.600" stroke="#444" stroke-width="0.600"/><circle cx="6.500" cy="6.500" r="0.500" fill="#666"/></svg>
<div class="b" style="left:2.00px;top:97.20px;width:28.80px;height:0.80px;background:#cdd3e0;"></div>
<svg style="left:1.90px;top:100.70px" width="12.20" height="12.20" viewBox="0 0 13 13"><path d="M4.200 3v7l1.700-1.500 1 2.200 1.100-.5-1-2.100h2.300z" fill="#fff" stroke="#222" stroke-width="0.700"/></svg>
<svg style="left:17.20px;top:100.70px" width="12.20" height="12.20" viewBox="0 0 13 13"><circle cx="6.400" cy="6.400" r="1.200" fill="#fff" stroke="#444" stroke-width="0.700"/><path d="M13.6 10.8V13.6H10.8Z" fill="#3a3a3a"/></svg>
<svg style="left:1.90px;top:116.01px" width="12.20" height="12.20" viewBox="0 0 13 13"><path d="M2 10.800L6 2.400l5 7.400" fill="none" stroke="#111" stroke-width="0.900"/><rect x="1.4" y="10.2" width="1.3" height="1.3" fill="#111"/><rect x="5.3" y="1.8" width="1.3" height="1.3" fill="#111"/><rect x="10.4" y="9.2" width="1.3" height="1.3" fill="#111"/><path d="M13.6 10.8V13.6H10.8Z" fill="#3a3a3a"/></svg>
<svg style="left:17.20px;top:116.01px" width="12.20" height="12.20" viewBox="0 0 13 13"><path d="M2.600 3.400h6.600M2.600 10h4c3.200 0 4-3 3.200-6.400" fill="none" stroke="#111" stroke-width="0.900"/><rect x="1.8" y="2.6" width="1.600" height="1.600" fill="#fff" stroke="#111" stroke-width="0.500"/><rect x="8.8" y="1.8" width="1.600" height="1.600" fill="#fff" stroke="#111" stroke-width="0.500"/><rect x="1.8" y="9.2" width="1.600" height="1.600" fill="#fff" stroke="#111" stroke-width="0.500"/><rect x="10.2" y="10.0" width="1.3" height="1.3" fill="#111"/><path d="M13.6 10.8V13.6H10.8Z" fill="#3a3a3a"/></svg>
<svg style="left:1.90px;top:131.32px" width="12.20" height="12.20" viewBox="0 0 13 13"><circle cx="6.200" cy="6.800" r="5" fill="none" stroke="#111" stroke-width="0.800"/><path d="M6.200 6.800l3.600-3.600" stroke="#111" stroke-width="0.900"/><rect x="5.5" y="6.1" width="1.3" height="1.3" fill="#111"/><rect x="9.2" y="2.5" width="1.3" height="1.3" fill="#111"/><path d="M13.6 10.8V13.6H10.8Z" fill="#3a3a3a"/></svg>
<svg style="left:17.20px;top:131.32px" width="12.20" height="12.20" viewBox="0 0 13 13"><ellipse cx="6.500" cy="6.800" rx="5.400" ry="3.600" fill="none" stroke="#111" stroke-width="0.800"/><rect x="5.7" y="2.4" width="1.600" height="1.600" fill="#fff" stroke="#111" stroke-width="0.500"/><rect x="5.7" y="6.0" width="1.600" height="1.600" fill="#fff" stroke="#111" stroke-width="0.500"/><rect x="10.2" y="6.0" width="1.600" height="1.600" fill="#fff" stroke="#111" stroke-width="0.500"/><path d="M13.6 10.8V13.6H10.8Z" fill="#3a3a3a"/></svg>
<svg style="left:1.90px;top:146.63px" width="12.20" height="12.20" viewBox="0 0 13 13"><path d="M2.400 1.800v9.200M2.400 1.800C6.400 2.400 9.600 4.400 11 7.400L2.400 11" fill="none" stroke="#111" stroke-width="0.800"/><rect x="1.8" y="1.2" width="1.3" height="1.3" fill="#111"/><rect x="1.8" y="10.4" width="1.3" height="1.3" fill="#111"/><rect x="10.4" y="6.8" width="1.3" height="1.3" fill="#111"/><path d="M13.6 10.8V13.6H10.8Z" fill="#3a3a3a"/></svg>
<svg style="left:17.20px;top:146.63px" width="12.20" height="12.20" viewBox="0 0 13 13"><rect x="1.600" y="3" width="9.800" height="6.600" fill="none" stroke="#111" stroke-width="0.900"/><rect x="1.0" y="2.3" width="1.3" height="1.3" fill="#111"/><rect x="10.8" y="2.3" width="1.3" height="1.3" fill="#111"/><rect x="1.0" y="9.0" width="1.3" height="1.3" fill="#111"/><rect x="10.8" y="9.0" width="1.3" height="1.3" fill="#111"/><path d="M13.6 10.8V13.6H10.8Z" fill="#3a3a3a"/></svg>
<svg style="left:1.90px;top:161.94px" width="12.20" height="12.20" viewBox="0 0 13 13"><path d="M6 1.600l4.200 2.400v5L6 11.400 1.800 9V4z" fill="none" stroke="#111" stroke-width="0.800"/><path d="M6 6.500h4" stroke="#111" stroke-width="0.800"/><rect x="5.2" y="5.7" width="1.600" height="1.600" fill="#fff" stroke="#111" stroke-width="0.500"/><rect x="9.6" y="5.8" width="1.3" height="1.3" fill="#111"/><path d="M13.6 10.8V13.6H10.8Z" fill="#3a3a3a"/></svg>
<svg style="left:17.20px;top:161.94px" width="12.20" height="12.20" viewBox="0 0 13 13"><path d="M2 1.800h3c4 0 5 3 5 8.800" fill="none" stroke="#111" stroke-width="1.500"/><rect x="1.2" y="1.0" width="1.600" height="1.600" fill="#fff" stroke="#111" stroke-width="0.500"/><rect x="9.5" y="10.1" width="1.8" height="1.8" fill="#111"/><path d="M13.6 10.8V13.6H10.8Z" fill="#3a3a3a"/></svg>
<svg style="left:1.90px;top:177.25px" width="12.20" height="12.20" viewBox="0 0 13 13"><path d="M3 3.200l7.400-1.600L9 10.800 1.600 8.600z" fill="#5a7ae0" stroke="#2a48b0" stroke-width="0.500"/><path d="M5.600 2.600L4.400 9.400M8 2.200L6.800 10M2.400 6l7.600.8" stroke="#fff" stroke-width="0.500"/><rect x="2.2" y="2.4" width="1.600" height="1.600" fill="#fff" stroke="#111" stroke-width="0.500"/><rect x="9.6" y="0.8" width="1.600" height="1.600" fill="#fff" stroke="#111" stroke-width="0.500"/><rect x="8.2" y="10.0" width="1.600" height="1.600" fill="#fff" stroke="#111" stroke-width="0.500"/><rect x="0.8" y="7.8" width="1.600" height="1.600" fill="#fff" stroke="#111" stroke-width="0.500"/><path d="M13.6 10.8V13.6H10.8Z" fill="#3a3a3a"/></svg>
<svg style="left:17.20px;top:177.25px" width="12.20" height="12.20" viewBox="0 0 13 13"><path d="M2 3.600C5 1 9 2 11.400 5.600L9.600 11C8.400 7.600 6.400 6.200 4.200 6.600z" fill="#5a7ae0" stroke="#333" stroke-width="0.500"/><path d="M2 3.600l2.200 3M9.600 11l1.800-5.400" stroke="#fff" stroke-width="1.400"/><path d="M2 3.600C5 1 9 2 11.400 5.600" fill="none" stroke="#222" stroke-width="0.600"/><path d="M13.6 10.8V13.6H10.8Z" fill="#3a3a3a"/></svg>
<svg style="left:1.90px;top:192.56px" width="12.20" height="12.20" viewBox="0 0 13 13"><path d="M1.400 3.600l5-2 5.200 2v5.800l-5.200 2.400-5-2.400z" fill="#5a7ae0" stroke="#2a48b0" stroke-width="0.500"/><path d="M1.400 3.600l5.200 2.200 5-2.200-5.200-2z" fill="#a8bcf4"/><path d="M6.600 5.800v6l5-2.400V3.600z" fill="#2a48b0"/><path d="M13.6 10.8V13.6H10.8Z" fill="#3a3a3a"/></svg>
<svg style="left:17.20px;top:192.56px" width="12.20" height="12.20" viewBox="0 0 13 13"><circle cx="8.400" cy="4.200" r="3.700" fill="url(#gBlu2)" stroke="#1a2f80" stroke-width="0.500"/><circle cx="4.600" cy="8.400" r="3.900" fill="url(#gBlu2)" stroke="#1a2f80" stroke-width="0.500"/><path d="M4.600 4.600v7.600M0.800 8.400h7.600" stroke="#9db8f0" stroke-width="0.300"/><path d="M13.6 10.8V13.6H10.8Z" fill="#3a3a3a"/></svg>
<svg style="left:1.90px;top:207.87px" width="12.20" height="12.20" viewBox="0 0 13 13"><path d="M0.800 6.200v4.200c0 2.400 11.400 2.400 11.400 0V6.200c-2 1.800-9.400 1.800-11.400 0z" fill="#5a7ae0" stroke="#1a2f80" stroke-width="0.600"/><ellipse cx="6.500" cy="9.400" rx="3.200" ry="1.200" fill="#e8eeff" stroke="#fff" stroke-width="0.400"/><ellipse cx="6.500" cy="2.400" rx="3" ry="1.300" fill="#f4f4f4" stroke="#666" stroke-width="0.700"/><path d="M13.6 10.8V13.6H10.8Z" fill="#3a3a3a"/></svg>
<svg style="left:17.20px;top:207.87px" width="12.20" height="12.20" viewBox="0 0 13 13"><path d="M3.800 1.200l8.200 2.400-3.200 8.200-8-3.400z" fill="#5a7ae0" stroke="#2a48b0" stroke-width="0.600"/><path d="M4.400 3.600l5 1.400-1.600 4.200-4.800-1.800z" fill="#a8bcf4"/><path d="M5.600 1.800L3 10M9.600 3L7 11" stroke="#dfe6ff" stroke-width="0.400"/><path d="M13.6 10.8V13.6H10.8Z" fill="#3a3a3a"/></svg>
<svg style="left:1.90px;top:223.18px" width="12.20" height="12.20" viewBox="0 0 13 13"><path d="M1.200 3.400h2.200c-.6-2 2.400-2 1.800 0h2.200v2c2-.6 2 2.400 0 1.800v1.600H5.600c.6-1.800-2.400-1.800-1.800 0H1.200z" fill="#f4a818" stroke="#8a5200" stroke-width="0.500"/><path d="M6.400 6.400l5.600 1.600-1.600 1.200 1.800 2.200-1.400 1-1.600-2.200-1.400 1.400z" fill="#fff" stroke="#444" stroke-width="0.600"/></svg>
<svg style="left:17.20px;top:223.18px" width="12.20" height="12.20" viewBox="0 0 13 13"><path d="M1.200 12.200V2.600l3 5.200L9.800 0.800 8 7l4.200-.6-3.400 2.800 3 1.400-5 .4z" fill="#f4a010"/><path d="M1.200 12.200l2.400-.4 1.600-3.200z" fill="#ffd040"/></svg>
<svg style="left:1.90px;top:238.49px" width="12.20" height="12.20" viewBox="0 0 13 13"><path d="M0.800 6.800h7v2.600h-7z" fill="#fff" stroke="#111" stroke-width="0.800"/><path d="M7.400 1l-1 5.600" stroke="#1a2fa0" stroke-width="1.600"/><path d="M7.600 9.200l3 2-1.200 1.600-3-2.200z" fill="#fff" stroke="#444" stroke-width="0.600"/></svg>
<svg style="left:17.20px;top:238.49px" width="12.20" height="12.20" viewBox="0 0 13 13"><path d="M1.200 6.800h10v2.800h-10z" fill="#fff" stroke="#111" stroke-width="0.800"/><path d="M7.200 1.400l-1 7.600" stroke="#1a2fa0" stroke-width="1.600"/></svg>
<svg style="left:1.90px;top:253.80px" width="12.20" height="12.20" viewBox="0 0 13 13"><circle cx="6.400" cy="4.200" r="2.600" fill="#8a8ae8" stroke="#111" stroke-width="1"/><circle cx="4.300" cy="7.800" r="2.600" fill="#fff" stroke="#111" stroke-width="1"/><circle cx="8.500" cy="7.800" r="2.600" fill="#10107a" stroke="#111" stroke-width="1"/><path d="M13.6 10.8V13.6H10.8Z" fill="#3a3a3a"/></svg>
<svg style="left:17.20px;top:253.80px" width="12.20" height="12.20" viewBox="0 0 13 13"><circle cx="6.500" cy="3" r="2.300" fill="#9a9af0" stroke="#8888cc" stroke-width="0.400"/><circle cx="3.200" cy="8.600" r="2.300" fill="#fff" stroke="#999" stroke-width="0.500"/><circle cx="9.800" cy="8.800" r="2.300" fill="#10107a"/></svg>
<svg style="left:1.90px;top:269.11px" width="12.20" height="12.20" viewBox="0 0 13 13"><path d="M2 4.400c4-.6 7 2.600 7.400 7" fill="none" stroke="#111" stroke-width="1.100"/><path d="M0.800 4.600l2.600-1.800.2 3zM9.400 12.400l-1.600-2.600 3-.2z" fill="#111"/></svg>
<svg style="left:17.20px;top:269.11px" width="12.20" height="12.20" viewBox="0 0 13 13"><path d="M1.600 3.600c4-.6 7.600 2.400 8 7" fill="none" stroke="#111" stroke-width="0.900"/><path d="M1 1.600c5 0 8 3 9.200 6" fill="none" stroke="#666" stroke-width="0.600"/><path d="M4.400 0.600l1 1.400M8 5.600h2.400v2" stroke="#222" stroke-width="0.600" fill="none"/><rect x="9.6" y="10.2" width="1.6" height="1.6" fill="#111"/><path d="M13.6 10.8V13.6H10.8Z" fill="#3a3a3a"/></svg>
<svg style="left:1.90px;top:284.42px" width="12.20" height="12.20" viewBox="0 0 13 13"><path d="M1.200 1.200h10.400v3h-1.400l-.6-1.200H8v7l1.400.6v1.200H3.800v-1.200l1.400-.6V3H3.400l-.6 1.200H1.200z" fill="#5a7ae0" stroke="#2a48b0" stroke-width="0.600"/></svg>
<svg style="left:17.20px;top:284.42px" width="12.20" height="12.20" viewBox="0 0 13 13"><rect x="1.400" y="7.800" width="3.400" height="3.400" fill="#fff" stroke="#111" stroke-width="0.700"/><rect x="8" y="1" width="3" height="3" fill="#5a7ae0" stroke="#2a48b0" stroke-width="0.500"/><path d="M5 7.600l3-3" stroke="#111" stroke-width="0.700" stroke-dasharray="1 0.600"/><path d="M13.6 10.8V13.6H10.8Z" fill="#3a3a3a"/></svg>
<svg style="left:1.90px;top:299.73px" width="12.20" height="12.20" viewBox="0 0 13 13"><path d="M3 3l4 3.600M7 6.600l3-3.600M7 6.600l3 3.600M3.400 9.600L7 6.600" stroke="#111" stroke-width="0.500"/><rect x="1" y="1" width="3.200" height="3.200" fill="#5a7ae0" stroke="#111" stroke-width="0.500"/><rect x="8.400" y="1.600" width="3" height="3" fill="#5a7ae0" stroke="#111" stroke-width="0.500"/><rect x="5.600" y="5.200" width="2.800" height="2.800" fill="#5a7ae0" stroke="#111" stroke-width="0.500"/><rect x="8.400" y="8.800" width="3" height="3" fill="#5a7ae0" stroke="#111" stroke-width="0.500"/><rect x="1" y="8" width="3.600" height="3.600" fill="#fff" stroke="#111" stroke-width="0.700"/></svg>
<svg style="left:17.20px;top:299.73px" width="12.20" height="12.20" viewBox="0 0 13 13"><rect x="1.200" y="1.600" width="3" height="8" fill="#fff" stroke="#111" stroke-width="0.800"/><path d="M6 10.800l5-5.600 1.600 1.600-5 5.600z" fill="#5a7ae0" stroke="#2a48b0" stroke-width="0.500"/><path d="M5.600 2.600l3 3M8.600 5.600V4M8.600 5.600H7" stroke="#111" stroke-width="0.600" fill="none"/></svg>
<svg style="left:1.90px;top:315.04px" width="12.20" height="12.20" viewBox="0 0 13 13"><path d="M1 4l5-3 6 1.600v6.800l-5 3-6-1.800z" fill="#5a7ae0" stroke="#2a48b0" stroke-width="0.600"/><path d="M1 4l6 1.800 5-3.200L6 1z" fill="#a8bcf4"/><path d="M7 5.800v6.600l5-3V2.600z" fill="#2a48b0"/><path d="M4.600 12V8.600l3.800-.2v3.400z" fill="#fff" stroke="#333" stroke-width="0.500"/><path d="M13.6 10.8V13.6H10.8Z" fill="#3a3a3a"/></svg>
<svg style="left:17.20px;top:315.04px" width="12.20" height="12.20" viewBox="0 0 13 13"><path d="M1 11.400l3-3h8.200l-3 3z" fill="#5a7ae0" stroke="#2a48b0" stroke-width="0.500"/><path d="M4.200 2v5M6.600 1.600v5.400M9 2v5" stroke="#fff" stroke-width="1.300"/><path d="M4.200 2v5M6.600 1.600v5.400M9 2v5" stroke="#a8a8b8" stroke-width="0.500"/><path d="M2.600 8.200h8" stroke="#222" stroke-width="0.600" stroke-dasharray="0.800 0.800"/><path d="M13.6 10.8V13.6H10.8Z" fill="#3a3a3a"/></svg>
<svg style="left:1.90px;top:330.35px" width="12.20" height="12.20" viewBox="0 0 13 13"><rect x="1.2" y="1.6" width="2.600" height="2" fill="#3a5ad0" stroke="#222" stroke-width="0.500"/><rect x="4.8" y="1.6" width="2.600" height="2" fill="#3a5ad0" stroke="#222" stroke-width="0.500"/><rect x="8.4" y="1.6" width="2.600" height="2" fill="#3a5ad0" stroke="#222" stroke-width="0.500"/><rect x="1.2" y="5.1" width="2.600" height="2" fill="#3a5ad0" stroke="#222" stroke-width="0.500"/><rect x="4.8" y="5.1" width="2.600" height="2" fill="#3a5ad0" stroke="#222" stroke-width="0.500"/><rect x="8.4" y="5.1" width="2.600" height="2" fill="#3a5ad0" stroke="#222" stroke-width="0.500"/><rect x="1.2" y="8.6" width="2.600" height="2" fill="#fff" stroke="#222" stroke-width="0.500"/><rect x="4.8" y="8.6" width="2.600" height="2" fill="#fff" stroke="#222" stroke-width="0.500"/><rect x="8.4" y="8.6" width="2.600" height="2" fill="#3a5ad0" stroke="#222" stroke-width="0.500"/><path d="M13.6 10.8V13.6H10.8Z" fill="#3a3a3a"/></svg>
<svg style="left:17.20px;top:330.35px" width="12.20" height="12.20" viewBox="0 0 13 13"><path d="M4.400 1c-.8 3.600 1.600 3.600.4 6-1 2.400-.4 3.600-.4 5M8.800 1c.8 3.600-1.600 3.600-.4 6 1 2.400.4 3.600.4 5" fill="none" stroke="#111" stroke-width="1.100"/><path d="M6.600 0.600v12" stroke="#e01010" stroke-width="0.900"/><path d="M4.400 3h4.400M4.800 9.600h3.600" stroke="#555" stroke-width="0.500"/><path d="M13.6 10.8V13.6H10.8Z" fill="#3a3a3a"/></svg>
<svg style="left:1.90px;top:345.66px" width="12.20" height="12.20" viewBox="0 0 13 13"><path d="M1 2.600l3.200-1 1 8.600-3 1.600z" fill="#fff" stroke="#111" stroke-width="0.800"/><path d="M4.200 1.600l2-.8.600 1.200" fill="none" stroke="#111" stroke-width="0.700"/><path d="M7.200 1.800l3.800 1-2.200 9-3.800-1.200z" fill="#5a7ae0" stroke="#2a48b0" stroke-width="0.700"/><path d="M5.200 10.200l-.6 1.600" stroke="#111" stroke-width="0.600"/><path d="M13.6 10.8V13.6H10.8Z" fill="#3a3a3a"/></svg>
<svg style="left:17.20px;top:345.66px" width="12.20" height="12.20" viewBox="0 0 13 13"><path d="M1.800 7.400l2.800 3.600 6.800-9.400" fill="none" stroke="#111" stroke-width="1.400"/><path d="M13.6 10.8V13.6H10.8Z" fill="#3a3a3a"/></svg>
<svg style="left:1.90px;top:360.97px" width="12.20" height="12.20" viewBox="0 0 13 13"><path d="M1 4.400l3.400-1.800 3.200 1v4.800L4.400 10.400 1 9z" fill="#ececec" stroke="#222" stroke-width="0.700"/><path d="M1 4.400l3.400 1.200 3.200-2M4.400 5.600v4.800" stroke="#222" stroke-width="0.600" fill="none"/><path d="M9 3.400l3.200 7-3.600 1.400-3-1.400z" fill="#d0d0d0" stroke="#222" stroke-width="0.700"/><path d="M9 3.400l-.4 8.400" stroke="#222" stroke-width="0.500"/><path d="M13.6 10.8V13.6H10.8Z" fill="#3a3a3a"/></svg>
<svg style="left:17.20px;top:360.97px" width="12.20" height="12.20" viewBox="0 0 13 13"><path d="M6 5l5.600 4.600-5.200 2.800-5.400-3z" fill="#f4b030" stroke="#a86a00" stroke-width="0.500"/><path d="M6 5l.4 7.400 5.200-2.800z" fill="#e09010"/><path d="M5.200 3.600l2.600-2.400h4v2H8.600z" fill="#fff" stroke="#222" stroke-width="0.600"/><path d="M8.800 1.200h3v2" stroke="#111" stroke-width="1.100" fill="none"/><path d="M13.6 10.8V13.6H10.8Z" fill="#3a3a3a"/></svg>
<div class="b" style="left:1.50px;top:700.30px;width:29.50px;height:0.80px;background:#d8dde8;"></div>
<svg style="left:1.80px;top:704.90px" width="12.80" height="12.80" viewBox="0 0 13 13"><rect x="0.400" y="0.400" width="12.200" height="12.200" rx="1" fill="#1c1c1c"/><circle cx="2.8" cy="2.8" r="1.300" fill="#d03020"/><circle cx="6.5" cy="2.8" r="1.300" fill="#e0a020"/><circle cx="10.2" cy="2.8" r="1.300" fill="#30a040"/><circle cx="2.8" cy="6.5" r="1.300" fill="#c02080"/><circle cx="6.5" cy="6.5" r="1.300" fill="#e8e8e8"/><circle cx="10.2" cy="6.5" r="1.300" fill="#2060d0"/><circle cx="2.8" cy="10.2" r="1.300" fill="#e06020"/><circle cx="6.5" cy="10.2" r="1.300" fill="#d0d020"/><circle cx="10.2" cy="10.2" r="1.300" fill="#a03020"/></svg>
<svg style="left:17.10px;top:704.90px" width="12.80" height="12.80" viewBox="0 0 13 13"><rect x="0.400" y="0.400" width="12.200" height="12.200" rx="1" fill="#2a2a2a"/><circle cx="6.500" cy="6.800" r="3.800" fill="#1a1a1a" stroke="#c8c8c8" stroke-width="0.900"/><circle cx="6.500" cy="6.800" r="1.400" fill="#e0d8b0"/><path d="M3 2.600l1 1M10 2.600l-1 1M6.500 1.200v1.200" stroke="#ddd" stroke-width="0.600"/></svg>
<div class="b" style="left:33.20px;top:95.50px;width:1.80px;height:650.00px;background:#e1e5ee;"></div>
<svg style="left:35.0px;top:95.5px" width="1110.5" height="630.7" viewBox="35.0 95.5 1110.5 630.7"><defs>
<filter id="paper" x="0" y="0" width="100%" height="100%" color-interpolation-filters="sRGB">
<feTurbulence type="fractalNoise" baseFrequency="0.22 0.95" numOctaves="2" seed="7" result="n"/>
<feColorMatrix in="n" type="matrix" values="0.13 0.13 0 0 0.84  0.13 0.13 0 0 0.84  0.14 0.14 0 0 0.83  0 0 0 0 1" result="tex"/>
<feBlend in="SourceGraphic" in2="tex" mode="multiply"/>
</filter>
<filter id="bl3" x="-20%" y="-20%" width="140%" height="140%"><feGaussianBlur stdDeviation="2.4"/></filter>
<filter id="bl2" x="-20%" y="-20%" width="140%" height="140%"><feGaussianBlur stdDeviation="1.5"/></filter>
<filter id="bl1" x="-20%" y="-20%" width="140%" height="140%"><feGaussianBlur stdDeviation="0.8"/></filter>
<linearGradient id="rg" x1="0" y1="0" x2="0.25" y2="1"><stop offset="0" stop-color="#46443c" stop-opacity="0.95"/><stop offset="0.45" stop-color="#46443c" stop-opacity="0.72"/><stop offset="1" stop-color="#46443c" stop-opacity="0.08"/></linearGradient>
<clipPath id="ringtop"><ellipse cx="598.4" cy="279" rx="58" ry="15.2"/></clipPath>
<clipPath id="bodyclip"><path d="M549 296.5 C546 306 540 313 530 322 C514 336 502 352 501.6 385 L501.8 480 C502.5 520 503.5 540 506.5 557 C511 585 528 604 555 613.5 C580 622 615 622.5 640 613.5 C668 603 684 580 689 552 C692 530 694 500 694.7 470 L695.3 392 C695 358 684 340 671 326 C659 314 650 308 647.2 296 Z"/></clipPath>
<clipPath id="notbody"><path clip-rule="evenodd" d="M30 90 H1150 V730 H30 Z M549 296.5 C546 306 540 313 530 322 C514 336 502 352 501.6 385 L501.8 480 C502.5 520 503.5 540 506.5 557 C511 585 528 604 555 613.5 C580 622 615 622.5 640 613.5 C668 603 684 580 689 552 C692 530 694 500 694.7 470 L695.3 392 C695 358 684 340 671 326 C659 314 650 308 647.2 296 Z"/></clipPath>
<clipPath id="vp"><rect x="35" y="95.5" width="1110.5" height="630.7"/></clipPath>
</defs><g clip-path="url(#vp)" filter="url(#paper)"><rect x="30" y="90" width="1120" height="640" fill="#dfd9c8"/><g clip-path="url(#notbody)"><path d="M688 417 C700 413 714 410 728 410 C752 410 775 416 778.2 428 C779.5 437 769 445 757.6 450.4 C764 456 768 465 768.4 475 C768.4 483 766 488 764.2 491.3 C760 502 755 511 749.5 520.7 C742 532 734 543 726.6 553.3 C721 561 716 567 710.3 572.9 C705 578 700 582.5 695.6 586 C689 591.5 682 597 674.3 602.3 C668 606 661 609.5 654.7 612.1 C645 615.5 635 617.6 625.3 618.8 C615 620.5 604 621 594 621 L594 560 L680 540 Z" fill="#3e3a2c" opacity="0.58" filter="url(#bl1)"/></g><g clip-path="url(#bodyclip)"><path d="M546 297 C570 304 625 305 650 295 L656 312 C648 309 640 307.5 625 307.5 C600 307 575 305 546 300 Z" fill="#46443c" opacity="0.30" filter="url(#bl2)"/><path d="M628 298 L650 293 C652 306 660 313 670 324 L660 320 C650 314 640 308 628 305 Z" fill="#46443c" opacity="0.29" filter="url(#bl2)"/><path d="M695 440 C694.5 480 693 520 689.5 552 C684 582 668 604 640 614 C625 619.5 612 621 598 621" stroke="#46443c" stroke-width="2.4" fill="none" opacity="0.45" filter="url(#bl1)"/></g><g clip-path="url(#ringtop)"><path d="M536 260 L664 260 L664 284 C654 289 640 292.5 618 292 C590 291 558 287 540 276 Z" fill="url(#rg)" filter="url(#bl1)"/></g><path d="M652.5 289.5 C655.5 287 656.6 284 656.4 280 L656.4 287.5 C656 290.5 654 293 651 294.5 Z" fill="#46443c" opacity="0.55" filter="url(#bl1)"/><g fill="none" stroke="#c0c4cf" stroke-width="0.8"><path d="M541 276.5 A57.5 14.6 0 0 0 655.8 276.5"/><path d="M540.6 279 A58 15.2 0 0 0 656.2 279"/><path d="M552.5 270 V272.5 M639.5 270 V275.5 C639.5 277 640.5 277.5 642 277"/></g><g fill="none" stroke="#9da0ab" stroke-width="1.1"><ellipse cx="598.2" cy="275.4" rx="46.4" ry="12.2"/><path d="M540.4 279 A58 15.2 0 0 1 656.4 279 M540.4 279 L540.4 287.3 M656.4 287.3 L656.4 279"/></g><path d="M540.4 287.3 A58 15.2 0 0 0 656.4 287.3" fill="none" stroke="#6e7280" stroke-width="1.2"/><path d="M528.3 238.3 L528.3 251.5 A70.2 18.5 0 0 0 668.8 251.5 L668.8 238.3 A70.2 18.3 0 0 0 528.3 238.3 Z" fill="#dfd9c8"/><path d="M663.5 251 L668.6 246 V252 C668 256 666 259 663 261.5 Z" fill="#46443c" opacity="0.35" filter="url(#bl1)"/><g fill="none" stroke="#c0c4cf" stroke-width="0.8"><path d="M529 240.5 A70.2 17 0 0 0 664 243.5"/><path d="M540 229.8 C580 232 630 237 664.2 243.5 V260"/></g><g fill="none" stroke="#9da0ab" stroke-width="1.1"><path d="M528.3 238.3 A70.2 18.3 0 0 1 668.8 238.3"/><path d="M528.3 238.3 L528.3 251.5 M668.8 251.5 L668.8 238.3"/></g><path d="M528.3 251.5 A70.2 18.5 0 0 0 668.8 251.5" fill="none" stroke="#9da0ab" stroke-width="1.1"/><path d="M549 296.5 C546 306 540 313 530 322 C514 336 502 352 501.6 385 L501.8 480 C502.5 520 503.5 540 506.5 557 C511 585 528 604 555 613.5 C580 622 615 622.5 640 613.5 C668 603 684 580 689 552 C692 530 694 500 694.7 470 L695.3 392 C695 358 684 340 671 326 C659 314 650 308 647.2 296" fill="none" stroke="#9da0ab" stroke-width="1.1"/><path d="M695.3 400 L694.7 470 C694 500 692 530 689 552 C684 580 668 603 640 613.5 C625 619 610 620.5 597 620.5" fill="none" stroke="#6e7280" stroke-width="1.3"/><path d="M515 423.5 C530 430 560 437.5 614.7 440.8 L613.8 528.6 C575 528 540 521 516.5 508.2 Z" fill="none" stroke="#b9bcc7" stroke-width="0.9" stroke-linejoin="round"/><text transform="translate(527.6 487.8) skewY(7)" x="0" y="0" font-family="Liberation Sans, sans-serif" font-size="27" textLength="65" lengthAdjust="spacingAndGlyphs" fill="#e3decf" stroke="#c9cbd1" stroke-width="0.8">Brand</text></g><path d="M35 95.7 H1145.5" stroke="#c5d0e4" stroke-width="0.6" fill="none"/><path d="M1145.3 95.5 V726.2" stroke="#cbd4e4" stroke-width="0.7" fill="none"/></svg>
<div class="b" style="left:35.20px;top:95.70px;width:56.20px;height:10.70px;background:#8eabd2;"></div>
<span class="t" id="t34" style="left:38.80px;top:95.75px;font-size:7.80px;color:#000;font-weight:bold;transform:scaleX(0.9639);">Perspective</span>
<div class="b" style="left:85.30px;top:96.50px;width:0.70px;height:9.20px;background:#222;"></div>
<svg style="left:86.5px;top:100px" width="5" height="4" viewBox="0 0 5 4"><path d="M0.6 0.5h3.6L2.4 3z" fill="#111"/></svg>
<div class="b" style="left:35.00px;top:726.20px;width:1111.00px;height:0.70px;background:#d5dae4;"></div>
<svg style="left:30px;top:726px" width="160" height="17" viewBox="30 726 160 17"><path d="M81 727.2 H156.3 L160.6 739.4 H86 Z" fill="#dcdcdc"/><path d="M81 739.5 H160" stroke="#c9cfdb" stroke-width="0.5"/><path d="M35.5 726.6 V735 L40.2 739.7 H81.3 L82.4 738.4 V726.6 Z" fill="#f9fafc" stroke="#c9d2e3" stroke-width="0.6"/><path d="M103.7 727.4 L108.1 739.2" stroke="#f0f0f2" stroke-width="1"/><path d="M104.5 727.4 L108.9 739.2" stroke="#c4c4c8" stroke-width="0.4"/><path d="M131.2 727.4 L135.6 739.2" stroke="#f0f0f2" stroke-width="1"/><path d="M132.0 727.4 L136.4 739.2" stroke="#c4c4c8" stroke-width="0.4"/><path d="M158 727 L162.4 739.4 H174.5 Q176.3 739.4 176.3 737.8 V727 Z" fill="#f6f7fa" stroke="#cfd6e4" stroke-width="0.5"/><g stroke="#666" stroke-width="0.55" fill="none"><path d="M168 731.6v4M166 733.6h4"/><circle cx="168" cy="733.6" r="1.1" fill="#f6f7fa"/></g></svg>
<span class="t" id="t35" style="left:40.90px;top:729.35px;font-size:7.00px;color:#000;transform:scaleX(1.0498);">Perspective</span>
<span class="t" id="t36" style="left:88.40px;top:729.35px;font-size:7.00px;color:#000;transform:scaleX(1.1331);">Top</span>
<span class="t" id="t37" style="left:110.40px;top:729.35px;font-size:7.00px;color:#000;transform:scaleX(1.1136);">Front</span>
<span class="t" id="t38" style="left:137.70px;top:729.35px;font-size:7.00px;color:#000;transform:scaleX(1.1258);">Right</span>
<svg style="left:5.00px;top:746.30px" width="7.2" height="7.2" viewBox="0 0 10 10"><rect x="0.6" y="0.6" width="8.8" height="8.8" fill="#fff" stroke="#333" stroke-width="1"/><path d="M2.2 5l2 2.2 3.8-4.4" fill="none" stroke="#222" stroke-width="1.1"/></svg>
<span class="t" id="t39" style="left:13.75px;top:744.98px;font-size:7.10px;color:#000;transform:scaleX(0.9692);">端点</span>
<svg style="left:32.00px;top:746.30px" width="7.2" height="7.2" viewBox="0 0 10 10"><rect x="0.6" y="0.6" width="8.8" height="8.8" fill="#fff" stroke="#333" stroke-width="1"/><path d="M2.2 5l2 2.2 3.8-4.4" fill="none" stroke="#222" stroke-width="1.1"/></svg>
<span class="t" id="t40" style="left:40.50px;top:744.98px;font-size:7.10px;color:#000;transform:scaleX(0.9727);">最近点</span>
<svg style="left:65.50px;top:746.30px" width="7.2" height="7.2" viewBox="0 0 10 10"><rect x="0.6" y="0.6" width="8.8" height="8.8" fill="#fff" stroke="#333" stroke-width="1"/><path d="M2.2 5l2 2.2 3.8-4.4" fill="none" stroke="#222" stroke-width="1.1"/></svg>
<span class="t" id="t41" style="left:74.20px;top:744.98px;font-size:7.10px;color:#000;transform:scaleX(0.9868);">点</span>
<svg style="left:85.00px;top:746.30px" width="7.2" height="7.2" viewBox="0 0 10 10"><rect x="0.6" y="0.6" width="8.8" height="8.8" fill="#fff" stroke="#333" stroke-width="1"/><path d="M2.2 5l2 2.2 3.8-4.4" fill="none" stroke="#222" stroke-width="1.1"/></svg>
<span class="t" id="t42" style="left:93.70px;top:744.98px;font-size:7.10px;color:#000;transform:scaleX(0.9727);">中点</span>
<svg style="left:112.00px;top:746.30px" width="7.2" height="7.2" viewBox="0 0 10 10"><rect x="0.6" y="0.6" width="8.8" height="8.8" fill="#fff" stroke="#333" stroke-width="1"/><path d="M2.2 5l2 2.2 3.8-4.4" fill="none" stroke="#222" stroke-width="1.1"/></svg>
<span class="t" id="t43" style="left:120.70px;top:744.98px;font-size:7.10px;color:#000;transform:scaleX(0.9868);">中心点</span>
<svg style="left:146.20px;top:746.30px" width="7.2" height="7.2" viewBox="0 0 10 10"><rect x="0.6" y="0.6" width="8.8" height="8.8" fill="#fff" stroke="#333" stroke-width="1"/></svg>
<span class="t" id="t44" style="left:155.00px;top:744.98px;font-size:7.10px;color:#000;transform:scaleX(0.9656);">交点</span>
<svg style="left:173.20px;top:746.30px" width="7.2" height="7.2" viewBox="0 0 10 10"><rect x="0.6" y="0.6" width="8.8" height="8.8" fill="#fff" stroke="#333" stroke-width="1"/><path d="M2.2 5l2 2.2 3.8-4.4" fill="none" stroke="#222" stroke-width="1.1"/></svg>
<span class="t" id="t45" style="left:181.70px;top:744.98px;font-size:7.10px;color:#000;transform:scaleX(0.9868);">垂点</span>
<svg style="left:199.20px;top:746.30px" width="7.2" height="7.2" viewBox="0 0 10 10"><rect x="0.6" y="0.6" width="8.8" height="8.8" fill="#fff" stroke="#333" stroke-width="1"/></svg>
<span class="t" id="t46" style="left:208.20px;top:744.98px;font-size:7.10px;color:#000;transform:scaleX(1.0079);">切点</span>
<svg style="left:226.20px;top:746.30px" width="7.2" height="7.2" viewBox="0 0 10 10"><rect x="0.6" y="0.6" width="8.8" height="8.8" fill="#fff" stroke="#333" stroke-width="1"/><path d="M2.2 5l2 2.2 3.8-4.4" fill="none" stroke="#222" stroke-width="1.1"/></svg>
<span class="t" id="t47" style="left:235.00px;top:744.98px;font-size:7.10px;color:#000;transform:scaleX(0.9962);">四分点</span>
<svg style="left:260.00px;top:746.30px" width="7.2" height="7.2" viewBox="0 0 10 10"><rect x="0.6" y="0.6" width="8.8" height="8.8" fill="#fff" stroke="#333" stroke-width="1"/><path d="M2.2 5l2 2.2 3.8-4.4" fill="none" stroke="#222" stroke-width="1.1"/></svg>
<span class="t" id="t48" style="left:268.70px;top:744.98px;font-size:7.10px;color:#000;transform:scaleX(0.9727);">节点</span>
<svg style="left:287.00px;top:746.30px" width="7.2" height="7.2" viewBox="0 0 10 10"><rect x="0.6" y="0.6" width="8.8" height="8.8" fill="#fff" stroke="#333" stroke-width="1"/></svg>
<span class="t" id="t49" style="left:295.70px;top:744.98px;font-size:7.10px;color:#000;transform:scaleX(1.0079);">顶点</span>
<svg style="left:314.50px;top:747.10px" width="5.6" height="5.6" viewBox="0 0 10 10"><rect x="0.6" y="0.6" width="8.8" height="8.8" fill="#f3f3f3" stroke="#c4c4c4" stroke-width="1"/></svg>
<span class="t" id="t50" style="left:322.50px;top:744.98px;font-size:7.10px;color:#222;transform:scaleX(0.9656);">投影</span>
<svg style="left:348.60px;top:747.10px" width="5.6" height="5.6" viewBox="0 0 10 10"><rect x="0.6" y="0.6" width="8.8" height="8.8" fill="#f3f3f3" stroke="#c4c4c4" stroke-width="1"/></svg>
<span class="t" id="t51" style="left:356.20px;top:744.98px;font-size:7.10px;color:#222;transform:scaleX(1.0220);">停用</span>
<div class="b" style="left:0.00px;top:753.80px;width:1400.00px;height:0.80px;background:#d5dae4;"></div>
<div class="b" style="left:0.00px;top:754.60px;width:1400.00px;height:10.40px;background:#f0f1f4;"></div>
<div class="b" style="left:32.50px;top:754.60px;width:0.70px;height:10.40px;background:#dfe3ec;"></div>
<div class="b" style="left:81.00px;top:754.60px;width:0.70px;height:10.40px;background:#dfe3ec;"></div>
<div class="b" style="left:129.50px;top:754.60px;width:0.70px;height:10.40px;background:#dfe3ec;"></div>
<div class="b" style="left:177.00px;top:754.60px;width:0.70px;height:10.40px;background:#dfe3ec;"></div>
<div class="b" style="left:317.50px;top:754.60px;width:0.70px;height:10.40px;background:#dfe3ec;"></div>
<div class="b" style="left:1395.00px;top:754.60px;width:0.80px;height:10.40px;background:#d0d4dc;"></div>
<span class="t" id="t52" style="left:2.50px;top:755.67px;font-size:7.10px;color:#000;transform:scaleX(0.9269);">工作平面</span>
<span class="t" id="t53" style="left:41.00px;top:755.67px;font-size:7.10px;color:#000;transform:scaleX(0.9752);">x -651.833</span>
<span class="t" id="t54" style="left:90.00px;top:755.67px;font-size:7.10px;color:#000;transform:scaleX(0.9624);">y 538.153</span>
<span class="t" id="t55" style="left:142.50px;top:755.67px;font-size:7.10px;color:#000;transform:scaleX(0.9149);">z 0.000</span>
<span class="t" id="t56" style="left:195.00px;top:755.67px;font-size:7.10px;color:#000;transform:scaleX(0.9656);">毫米</span>
<div class="b" style="left:227.70px;top:756.60px;width:7.20px;height:7.20px;background:#000;"></div>
<span class="t" id="t57" style="left:236.20px;top:755.67px;font-size:7.10px;color:#000;transform:scaleX(0.9069);">预设值</span>
<div class="b" style="left:317.80px;top:754.60px;width:32.90px;height:10.40px;background:#f6f8fc;"></div>
<div class="b" style="left:351.00px;top:754.60px;width:0.70px;height:10.40px;background:#dfe3ec;"></div>
<span class="t" id="t58" style="left:321.00px;top:755.67px;font-size:7.10px;color:#000;font-weight:bold;transform:scaleX(0.9339);">锁定格点</span>
<div class="b" style="left:372.20px;top:754.60px;width:0.70px;height:10.40px;background:#dfe3ec;"></div>
<span class="t" id="t59" style="left:355.50px;top:755.67px;font-size:7.10px;color:#000;transform:scaleX(0.9304);">正交</span>
<div class="b" style="left:372.80px;top:754.60px;width:32.90px;height:10.40px;background:#f6f8fc;"></div>
<div class="b" style="left:406.00px;top:754.60px;width:0.70px;height:10.40px;background:#dfe3ec;"></div>
<span class="t" id="t60" style="left:376.00px;top:755.67px;font-size:7.10px;color:#000;font-weight:bold;transform:scaleX(0.9339);">平面模式</span>
<div class="b" style="left:406.80px;top:754.60px;width:32.40px;height:10.40px;background:#f6f8fc;"></div>
<div class="b" style="left:439.50px;top:754.60px;width:0.70px;height:10.40px;background:#dfe3ec;"></div>
<span class="t" id="t61" style="left:410.00px;top:755.67px;font-size:7.10px;color:#000;font-weight:bold;transform:scaleX(0.9163);">物件锁点</span>
<div class="b" style="left:440.50px;top:754.60px;width:33.20px;height:10.40px;background:#f6f8fc;"></div>
<div class="b" style="left:474.00px;top:754.60px;width:0.70px;height:10.40px;background:#dfe3ec;"></div>
<span class="t" id="t62" style="left:443.70px;top:755.67px;font-size:7.10px;color:#000;font-weight:bold;transform:scaleX(0.9445);">智慧轨迹</span>
<div class="b" style="left:474.80px;top:754.60px;width:25.90px;height:10.40px;background:#f6f8fc;"></div>
<div class="b" style="left:501.00px;top:754.60px;width:0.70px;height:10.40px;background:#dfe3ec;"></div>
<span class="t" id="t63" style="left:478.00px;top:755.67px;font-size:7.10px;color:#000;font-weight:bold;transform:scaleX(0.9163);">操作轴</span>
<div class="b" style="left:502.30px;top:754.60px;width:45.40px;height:10.40px;background:#f6f8fc;"></div>
<div class="b" style="left:548.00px;top:754.60px;width:0.70px;height:10.40px;background:#dfe3ec;"></div>
<span class="t" id="t64" style="left:505.50px;top:755.67px;font-size:7.10px;color:#000;font-weight:bold;transform:scaleX(0.9163);">记录建构历史</span>
<div class="b" style="left:575.50px;top:754.60px;width:0.70px;height:10.40px;background:#dfe3ec;"></div>
<span class="t" id="t65" style="left:552.50px;top:755.67px;font-size:7.10px;color:#000;transform:scaleX(0.9163);">过滤器</span>
<span class="t" id="t66" style="left:576.00px;top:755.67px;font-size:7.10px;color:#000;transform:scaleX(0.9368);">CPU 使用量: 2.9 %</span>
<div class="b" style="left:1149.00px;top:97.20px;width:250.60px;height:641.70px;background:#f7f7f9;border:0.8px solid #d0d7e5;"></div>
<svg style="left:1150px;top:97px" width="250" height="19" viewBox="1150 97 250 19"><path d="M1313.0 114.8 V101 Q1313.0 99 1315.0 99 H1337.8 Q1339.8 99 1341.1 100.6 L1354.0 114.8 Z" fill="#dddddf" stroke="#ececef" stroke-width="0.7"/><path d="M1274.5 114.8 V101 Q1274.5 99 1276.5 99 H1305.9 Q1307.9 99 1309.2 100.6 L1317.5 114.8 Z" fill="#dddddf" stroke="#ececef" stroke-width="0.7"/><path d="M1243.0 114.8 V101 Q1243.0 99 1245.0 99 H1267.4 Q1269.4 99 1270.7 100.6 L1279.0 114.8 Z" fill="#dddddf" stroke="#ececef" stroke-width="0.7"/><path d="M1212.0 114.8 V101 Q1212.0 99 1214.0 99 H1235.5 Q1237.5 99 1238.8 100.6 L1247.5 114.8 Z" fill="#dddddf" stroke="#ececef" stroke-width="0.7"/><path d="M1181.0 114.8 V101 Q1181.0 99 1183.0 99 H1204.5 Q1206.5 99 1207.8 100.6 L1216.5 114.8 Z" fill="#dddddf" stroke="#ececef" stroke-width="0.7"/><path d="M1151.2 115.4 V101 Q1151.2 99 1153.2 99 H1171.9 Q1173.9 99 1175.2 100.6 L1186.6 115.4 Z" fill="#f7f7f9" stroke="#d3daea" stroke-width="0.6"/><rect x="1150.6" y="114.7" width="40" height="1.4" fill="#f7f7f9"/></svg>
<svg style="left:1152.85px;top:103.95px" width="8.50" height="8.50" viewBox="0 0 13 13"><circle cx="6.500" cy="6.500" r="4.300" fill="none" stroke="#e02020" stroke-width="2.600" stroke-dasharray="4.500 22.500"/><circle cx="6.500" cy="6.500" r="4.300" fill="none" stroke="#f0d000" stroke-width="2.600" stroke-dasharray="4.500 22.500" stroke-dashoffset="-4.500"/><circle cx="6.500" cy="6.500" r="4.300" fill="none" stroke="#20c020" stroke-width="2.600" stroke-dasharray="4.500 22.500" stroke-dashoffset="-9"/><circle cx="6.500" cy="6.500" r="4.300" fill="none" stroke="#10b0d0" stroke-width="2.600" stroke-dasharray="4.500 22.500" stroke-dashoffset="-13.500"/><circle cx="6.500" cy="6.500" r="4.300" fill="none" stroke="#2030d0" stroke-width="2.600" stroke-dasharray="4.500 22.500" stroke-dashoffset="-18"/><circle cx="6.500" cy="6.500" r="4.300" fill="none" stroke="#c020c0" stroke-width="2.600" stroke-dasharray="4.500 22.500" stroke-dashoffset="-22.500"/><circle cx="6.500" cy="6.500" r="5.700" fill="none" stroke="#333" stroke-width="0.400"/></svg>
<span class="t" id="t67" style="left:1162.50px;top:103.83px;font-size:6.90px;color:#000;transform:scaleX(0.9433);">属性</span>
<svg style="left:1184.35px;top:103.95px" width="8.50" height="8.50" viewBox="0 0 13 13"><path d="M1 2.200L12 3.800l-.4 3.400L6.800 9 2 7.400z" fill="#f04a10" stroke="#7a1400" stroke-width="0.400"/><path d="M1 2.200l5.400 2.600L12 3.800" fill="none" stroke="#ffb080" stroke-width="0.500"/><path d="M2 7.400L6.800 9l4.800-1.800-.2 1.400-4.600 1.900-4.400-1.700z" fill="#fff"/><path d="M2.400 8.800l4.400 1.700 4.600-1.900-.4 1.500L7 12 3 10.200z" fill="#1a3fb0"/></svg>
<span class="t" id="t68" style="left:1194.00px;top:103.83px;font-size:6.90px;color:#000;transform:scaleX(0.9433);">图层</span>
<svg style="left:1215.85px;top:103.95px" width="8.50" height="8.50" viewBox="0 0 13 13"><circle cx="6.500" cy="6.500" r="5.400" fill="url(#gBlue)" stroke="#061040" stroke-width="0.500"/></svg>
<span class="t" id="t69" style="left:1225.50px;top:103.83px;font-size:6.90px;color:#000;transform:scaleX(0.9433);">渲染</span>
<svg style="left:1247.35px;top:103.95px" width="8.50" height="8.50" viewBox="0 0 13 13"><path d="M11.600 1.400L6.400 7.200l1 1L12.400 2.400z" fill="#d04020" stroke="#7a2010" stroke-width="0.400"/><path d="M6.400 7.200c-2-.6-3.600 1-3.400 2.800-.6.600-1.400.8-2 .8 1.600 1.400 5.600 1 6.400-2.600z" fill="#444"/></svg>
<span class="t" id="t70" style="left:1257.00px;top:103.83px;font-size:6.90px;color:#000;transform:scaleX(0.9433);">材质</span>
<svg style="left:1278.85px;top:103.95px" width="8.50" height="8.50" viewBox="0 0 13 13"><path d="M0.8 10.8V3.4h3.2l1 1.2h5v2" fill="#f7d34a" stroke="#6b4e00" stroke-width="0.8"/><path d="M0.8 10.8l2.4-4.6h9.2l-2.6 4.6z" fill="url(#gFold)" stroke="#6b4e00" stroke-width="0.8"/></svg>
<span class="t" id="t71" style="left:1288.50px;top:103.83px;font-size:6.90px;color:#000;transform:scaleX(0.9675);">材质库</span>
<svg style="left:1317.85px;top:103.95px" width="8.50" height="8.50" viewBox="0 0 13 13"><rect x="0.800" y="1.400" width="11.400" height="10" fill="#2a48b0" stroke="#0a1a70" stroke-width="0.600"/><rect x="2.200" y="2.800" width="6.400" height="7.200" fill="#c8d4f8"/><path d="M3.400 4.600c0-1.600 3-1.600 3 0 0 1-1.500 1-1.500 2.200M4.900 8v1" stroke="#0a1a70" stroke-width="0.900" fill="none"/><rect x="9.400" y="2.800" width="1.800" height="7.200" fill="#8aa0e8"/></svg>
<span class="t" id="t72" style="left:1327.00px;top:103.83px;font-size:6.90px;color:#000;transform:scaleX(0.9433);">说明</span>
<svg style="left:1390.50px;top:106.80px" width="8.00" height="8.00" viewBox="0 0 13 13"><circle cx="6.500" cy="6.500" r="3.600" fill="none" stroke="#9a9a9a" stroke-width="1.600"/><circle cx="6.500" cy="6.500" r="5.200" fill="none" stroke="#9a9a9a" stroke-width="1.800" stroke-dasharray="2 2.080"/></svg>
<div class="b" style="left:1152.20px;top:117.40px;width:14.20px;height:14.20px;background:#bcd6f2;border:0.8px solid #3d7fc8;"></div>
<svg style="left:1153.80px;top:119.00px" width="11.00" height="11.00" viewBox="0 0 13 13"><path d="M0.800 4.600c0-.6.400-1 1-1h1.600l1-1.600h4l1 1.600H11.200c.6 0 1 .4 1 1v5.800c0 .5-.4.900-1 .9H1.800c-.6 0-1-.4-1-.9z" fill="#2a2a2a" stroke="#000" stroke-width="0.500"/><circle cx="7" cy="7.200" r="2.900" fill="#555" stroke="#111" stroke-width="0.700"/><circle cx="7" cy="7.200" r="1.600" fill="#1a3a5a"/><circle cx="6.400" cy="6.600" r="0.600" fill="#7ab0e0"/><rect x="1.600" y="5" width="1.800" height="5" fill="#444"/></svg>
<div class="b" style="left:1168.70px;top:117.40px;width:14.20px;height:14.20px;background:#e9e9ee;border:0.6px solid #d0d3da;"></div>
<svg style="left:1170.30px;top:119.00px" width="11.00" height="11.00" viewBox="0 0 13 13"><rect x="0.200" y="0.200" width="12.600" height="12.600" fill="#9fdcf4" stroke="#666" stroke-width="1"/><rect x="2.400" y="3" width="8.200" height="7" fill="#fff" stroke="#e85050" stroke-width="0.900"/></svg>
<div class="b" style="left:1185.00px;top:117.40px;width:14.20px;height:14.20px;background:#e9e9ee;border:0.6px solid #d0d3da;"></div>
<svg style="left:1186.60px;top:119.00px" width="11.00" height="11.00" viewBox="0 0 13 13"><circle cx="4.400" cy="9" r="3.400" fill="url(#gBlue)"/><circle cx="8.200" cy="5" r="2.400" fill="url(#gBlue)"/><circle cx="10.800" cy="2" r="1.600" fill="url(#gBlue)"/></svg>
<div class="b" style="left:1152.20px;top:135.60px;width:243.60px;height:15.20px;background:#f7f7f9;"></div>
<span class="t" id="t73" style="left:1154.00px;top:137.40px;font-size:8.40px;color:#000;transform:scaleX(0.9552);">工作视窗</span>
<div class="b" style="left:1152.20px;top:151.68px;width:9.60px;height:13.65px;background:#f4f4f6;"></div>
<div class="b" style="left:1161.80px;top:151.68px;width:112.40px;height:12.95px;background:#fff;"></div>
<div class="b" style="left:1274.80px;top:151.68px;width:121.00px;height:12.95px;background:#fff;"></div>
<span class="t" id="t74" style="left:1164.30px;top:153.95px;font-size:7.00px;color:#000;transform:scaleX(1.0000);">标题</span>
<span class="t" id="t75" style="left:1276.50px;top:153.80px;font-size:7.20px;color:#000;transform:scaleX(1.0250);">Perspective</span>
<div class="b" style="left:1152.20px;top:165.38px;width:9.60px;height:13.65px;background:#f4f4f6;"></div>
<div class="b" style="left:1161.80px;top:165.38px;width:112.40px;height:12.95px;background:#fff;"></div>
<div class="b" style="left:1274.80px;top:165.38px;width:121.00px;height:12.95px;background:#ebebee;"></div>
<span class="t" id="t76" style="left:1164.30px;top:167.65px;font-size:7.00px;color:#8a8a8a;transform:scaleX(1.0000);">宽度</span>
<span class="t" id="t77" style="left:1276.50px;top:167.50px;font-size:7.20px;color:#8a8a8a;transform:scaleX(1.0938);">2030</span>
<div class="b" style="left:1152.20px;top:178.98px;width:9.60px;height:13.65px;background:#f4f4f6;"></div>
<div class="b" style="left:1161.80px;top:178.98px;width:112.40px;height:12.95px;background:#fff;"></div>
<div class="b" style="left:1274.80px;top:178.98px;width:121.00px;height:12.95px;background:#ebebee;"></div>
<span class="t" id="t78" style="left:1164.30px;top:181.25px;font-size:7.00px;color:#8a8a8a;transform:scaleX(1.0000);">高度</span>
<span class="t" id="t79" style="left:1276.50px;top:181.10px;font-size:7.20px;color:#8a8a8a;transform:scaleX(1.1313);">1153</span>
<div class="b" style="left:1152.20px;top:192.58px;width:9.60px;height:13.65px;background:#f4f4f6;"></div>
<div class="b" style="left:1161.80px;top:192.58px;width:112.40px;height:12.95px;background:#fff;"></div>
<div class="b" style="left:1274.80px;top:192.58px;width:121.00px;height:12.95px;background:#fff;"></div>
<span class="t" id="t80" style="left:1164.30px;top:194.85px;font-size:7.00px;color:#000;transform:scaleX(1.0000);">投影</span>
<span class="t" id="t81" style="left:1276.50px;top:194.70px;font-size:7.20px;color:#000;transform:scaleX(0.9729);">透视</span>
<div class="b" style="left:1382.30px;top:192.78px;width:13.30px;height:12.45px;background:#e6e6e8;border:0.6px solid #c8c8cc;"></div>
<svg style="left:1386.5px;top:197.80px" width="5" height="4" viewBox="0 0 5 4"><path d="M0.6 0.8l1.9 1.9 1.9-1.9" stroke="#444" stroke-width="0.7" fill="none"/></svg>
<div class="b" style="left:1152.20px;top:207.60px;width:243.60px;height:15.20px;background:#f7f7f9;"></div>
<span class="t" id="t82" style="left:1154.00px;top:209.40px;font-size:8.40px;color:#000;transform:scaleX(0.9751);">摄像机</span>
<div class="b" style="left:1152.20px;top:223.48px;width:9.60px;height:13.65px;background:#f4f4f6;"></div>
<div class="b" style="left:1161.80px;top:223.48px;width:112.40px;height:12.95px;background:#fff;"></div>
<div class="b" style="left:1274.80px;top:223.48px;width:121.00px;height:12.95px;background:#fff;"></div>
<span class="t" id="t83" style="left:1164.30px;top:225.75px;font-size:7.00px;color:#000;transform:scaleX(1.0000);">镜头焦距</span>
<span class="t" id="t84" style="left:1276.50px;top:225.60px;font-size:7.20px;color:#000;transform:scaleX(1.0357);">50.0</span>
<div class="b" style="left:1152.20px;top:237.18px;width:9.60px;height:13.65px;background:#f4f4f6;"></div>
<div class="b" style="left:1161.80px;top:237.18px;width:112.40px;height:12.95px;background:#fff;"></div>
<div class="b" style="left:1274.80px;top:237.18px;width:121.00px;height:12.95px;background:#fff;"></div>
<span class="t" id="t85" style="left:1164.30px;top:239.45px;font-size:7.00px;color:#000;transform:scaleX(1.0000);">旋转</span>
<span class="t" id="t86" style="left:1276.50px;top:239.30px;font-size:7.20px;color:#000;transform:scaleX(1.0500);">0.0</span>
<div class="b" style="left:1152.20px;top:250.68px;width:9.60px;height:13.65px;background:#f4f4f6;"></div>
<div class="b" style="left:1161.80px;top:250.68px;width:112.40px;height:12.95px;background:#fff;"></div>
<div class="b" style="left:1274.80px;top:250.68px;width:121.00px;height:12.95px;background:#fff;"></div>
<span class="t" id="t87" style="left:1164.30px;top:252.95px;font-size:7.00px;color:#000;transform:scaleX(0.9939);">X 座标</span>
<span class="t" id="t88" style="left:1276.50px;top:252.80px;font-size:7.20px;color:#000;transform:scaleX(1.0583);">130.674</span>
<div class="b" style="left:1152.20px;top:264.38px;width:9.60px;height:13.65px;background:#f4f4f6;"></div>
<div class="b" style="left:1161.80px;top:264.38px;width:112.40px;height:12.95px;background:#fff;"></div>
<div class="b" style="left:1274.80px;top:264.38px;width:121.00px;height:12.95px;background:#fff;"></div>
<span class="t" id="t89" style="left:1164.30px;top:266.65px;font-size:7.00px;color:#000;transform:scaleX(1.0000);">Y 座标</span>
<span class="t" id="t90" style="left:1276.50px;top:266.50px;font-size:7.20px;color:#000;transform:scaleX(1.0749);">-303.136</span>
<div class="b" style="left:1152.20px;top:278.18px;width:9.60px;height:13.65px;background:#f4f4f6;"></div>
<div class="b" style="left:1161.80px;top:278.18px;width:112.40px;height:12.95px;background:#fff;"></div>
<div class="b" style="left:1274.80px;top:278.18px;width:121.00px;height:12.95px;background:#fff;"></div>
<span class="t" id="t91" style="left:1164.30px;top:280.45px;font-size:7.00px;color:#000;transform:scaleX(1.0131);">Z 座标</span>
<span class="t" id="t92" style="left:1276.50px;top:280.30px;font-size:7.20px;color:#000;transform:scaleX(1.0583);">188.486</span>
<div class="b" style="left:1152.20px;top:291.78px;width:9.60px;height:13.65px;background:#f4f4f6;"></div>
<div class="b" style="left:1161.80px;top:291.78px;width:112.40px;height:12.95px;background:#fff;"></div>
<div class="b" style="left:1274.80px;top:291.78px;width:121.00px;height:12.95px;background:#ebebee;"></div>
<span class="t" id="t93" style="left:1164.30px;top:294.05px;font-size:7.00px;color:#000;transform:scaleX(1.0000);">目标点距离</span>
<span class="t" id="t94" style="left:1276.50px;top:293.90px;font-size:7.20px;color:#000;transform:scaleX(1.0583);">378.707</span>
<div class="b" style="left:1152.20px;top:305.48px;width:9.60px;height:13.65px;background:#f4f4f6;"></div>
<div class="b" style="left:1161.80px;top:305.48px;width:112.40px;height:12.95px;background:#fff;"></div>
<div class="b" style="left:1274.80px;top:305.48px;width:121.00px;height:12.95px;background:#fff;"></div>
<span class="t" id="t95" style="left:1164.30px;top:307.75px;font-size:7.00px;color:#000;transform:scaleX(1.0000);">位置</span>
<div class="b" style="left:1275.00px;top:306.08px;width:120.60px;height:12.05px;background:#e1e1e1;border:0.7px solid #adadad;"></div>
<span class="t" id="t96" style="left:1325.50px;top:307.75px;font-size:7.00px;color:#000;transform:scaleX(0.9827);">放置...</span>
<div class="b" style="left:1152.20px;top:319.80px;width:243.60px;height:15.20px;background:#f7f7f9;"></div>
<span class="t" id="t97" style="left:1154.00px;top:321.60px;font-size:8.40px;color:#000;transform:scaleX(0.9751);">目标点</span>
<div class="b" style="left:1152.20px;top:336.18px;width:9.60px;height:13.65px;background:#f4f4f6;"></div>
<div class="b" style="left:1161.80px;top:336.18px;width:112.40px;height:12.95px;background:#fff;"></div>
<div class="b" style="left:1274.80px;top:336.18px;width:121.00px;height:12.95px;background:#fff;"></div>
<span class="t" id="t98" style="left:1164.30px;top:338.45px;font-size:7.00px;color:#000;transform:scaleX(0.9939);">X 座标</span>
<span class="t" id="t99" style="left:1276.50px;top:338.30px;font-size:7.20px;color:#000;transform:scaleX(1.0660);">-10.557</span>
<div class="b" style="left:1152.20px;top:349.78px;width:9.60px;height:13.65px;background:#f4f4f6;"></div>
<div class="b" style="left:1161.80px;top:349.78px;width:112.40px;height:12.95px;background:#fff;"></div>
<div class="b" style="left:1274.80px;top:349.78px;width:121.00px;height:12.95px;background:#fff;"></div>
<span class="t" id="t100" style="left:1164.30px;top:352.05px;font-size:7.00px;color:#000;transform:scaleX(1.0000);">Y 座标</span>
<span class="t" id="t101" style="left:1276.50px;top:351.90px;font-size:7.20px;color:#000;transform:scaleX(1.0689);">18.609</span>
<div class="b" style="left:1152.20px;top:363.48px;width:9.60px;height:13.65px;background:#f4f4f6;"></div>
<div class="b" style="left:1161.80px;top:363.48px;width:112.40px;height:12.95px;background:#fff;"></div>
<div class="b" style="left:1274.80px;top:363.48px;width:121.00px;height:12.95px;background:#fff;"></div>
<span class="t" id="t102" style="left:1164.30px;top:365.75px;font-size:7.00px;color:#000;transform:scaleX(1.0131);">Z 座标</span>
<span class="t" id="t103" style="left:1276.50px;top:365.60px;font-size:7.20px;color:#000;transform:scaleX(1.0689);">47.232</span>
<div class="b" style="left:1152.20px;top:377.18px;width:9.60px;height:13.65px;background:#f4f4f6;"></div>
<div class="b" style="left:1161.80px;top:377.18px;width:112.40px;height:12.95px;background:#fff;"></div>
<div class="b" style="left:1274.80px;top:377.18px;width:121.00px;height:12.95px;background:#fff;"></div>
<span class="t" id="t104" style="left:1164.30px;top:379.45px;font-size:7.00px;color:#000;transform:scaleX(1.0000);">位置</span>
<div class="b" style="left:1275.00px;top:377.78px;width:120.60px;height:12.05px;background:#e1e1e1;border:0.7px solid #adadad;"></div>
<span class="t" id="t105" style="left:1325.50px;top:379.45px;font-size:7.00px;color:#000;transform:scaleX(0.9827);">放置...</span>
<div class="b" style="left:1152.20px;top:391.60px;width:243.60px;height:15.20px;background:#f7f7f9;"></div>
<span class="t" id="t106" style="left:1154.00px;top:393.40px;font-size:8.40px;color:#000;transform:scaleX(0.9552);">底色图案</span>
<div class="b" style="left:1152.20px;top:407.88px;width:9.60px;height:13.65px;background:#f4f4f6;"></div>
<div class="b" style="left:1161.80px;top:407.88px;width:112.40px;height:12.95px;background:#fff;"></div>
<div class="b" style="left:1274.80px;top:407.88px;width:121.00px;height:12.95px;background:#fff;"></div>
<span class="t" id="t107" style="left:1164.30px;top:410.15px;font-size:7.00px;color:#000;transform:scaleX(1.0000);">文件名称</span>
<span class="t" id="t108" style="left:1276.50px;top:410.00px;font-size:7.20px;color:#000;transform:scaleX(1.0430);">(无)</span>
<div class="b" style="left:1383.20px;top:408.27px;width:12.40px;height:12.05px;background:#e4e4e6;border:0.6px solid #b8b8bc;"></div>
<span class="t" id="t109" style="left:1387.20px;top:411.32px;font-size:6.50px;color:#000;transform:scaleX(0.8300);">...</span>
<div class="b" style="left:1152.20px;top:421.57px;width:9.60px;height:13.65px;background:#f4f4f6;"></div>
<div class="b" style="left:1161.80px;top:421.57px;width:112.40px;height:12.95px;background:#fff;"></div>
<div class="b" style="left:1274.80px;top:421.57px;width:121.00px;height:12.95px;background:#fff;"></div>
<span class="t" id="t110" style="left:1164.30px;top:423.85px;font-size:7.00px;color:#000;transform:scaleX(1.0000);">显示</span>
<svg style="left:1275.20px;top:424.90px" width="7.0" height="7.0" viewBox="0 0 10 10"><rect x="0.6" y="0.6" width="8.8" height="8.8" fill="#fff" stroke="#333" stroke-width="1"/><path d="M2.2 5l2 2.2 3.8-4.4" fill="none" stroke="#222" stroke-width="1.1"/></svg>
<div class="b" style="left:1152.20px;top:435.18px;width:9.60px;height:13.65px;background:#f4f4f6;"></div>
<div class="b" style="left:1161.80px;top:435.18px;width:112.40px;height:12.95px;background:#fff;"></div>
<div class="b" style="left:1274.80px;top:435.18px;width:121.00px;height:12.95px;background:#fff;"></div>
<span class="t" id="t111" style="left:1164.30px;top:437.45px;font-size:7.00px;color:#000;transform:scaleX(1.0000);">灰阶</span>
<svg style="left:1275.20px;top:438.50px" width="7.0" height="7.0" viewBox="0 0 10 10"><rect x="0.6" y="0.6" width="8.8" height="8.8" fill="#fff" stroke="#333" stroke-width="1"/><path d="M2.2 5l2 2.2 3.8-4.4" fill="none" stroke="#222" stroke-width="1.1"/></svg>
</body></html>
